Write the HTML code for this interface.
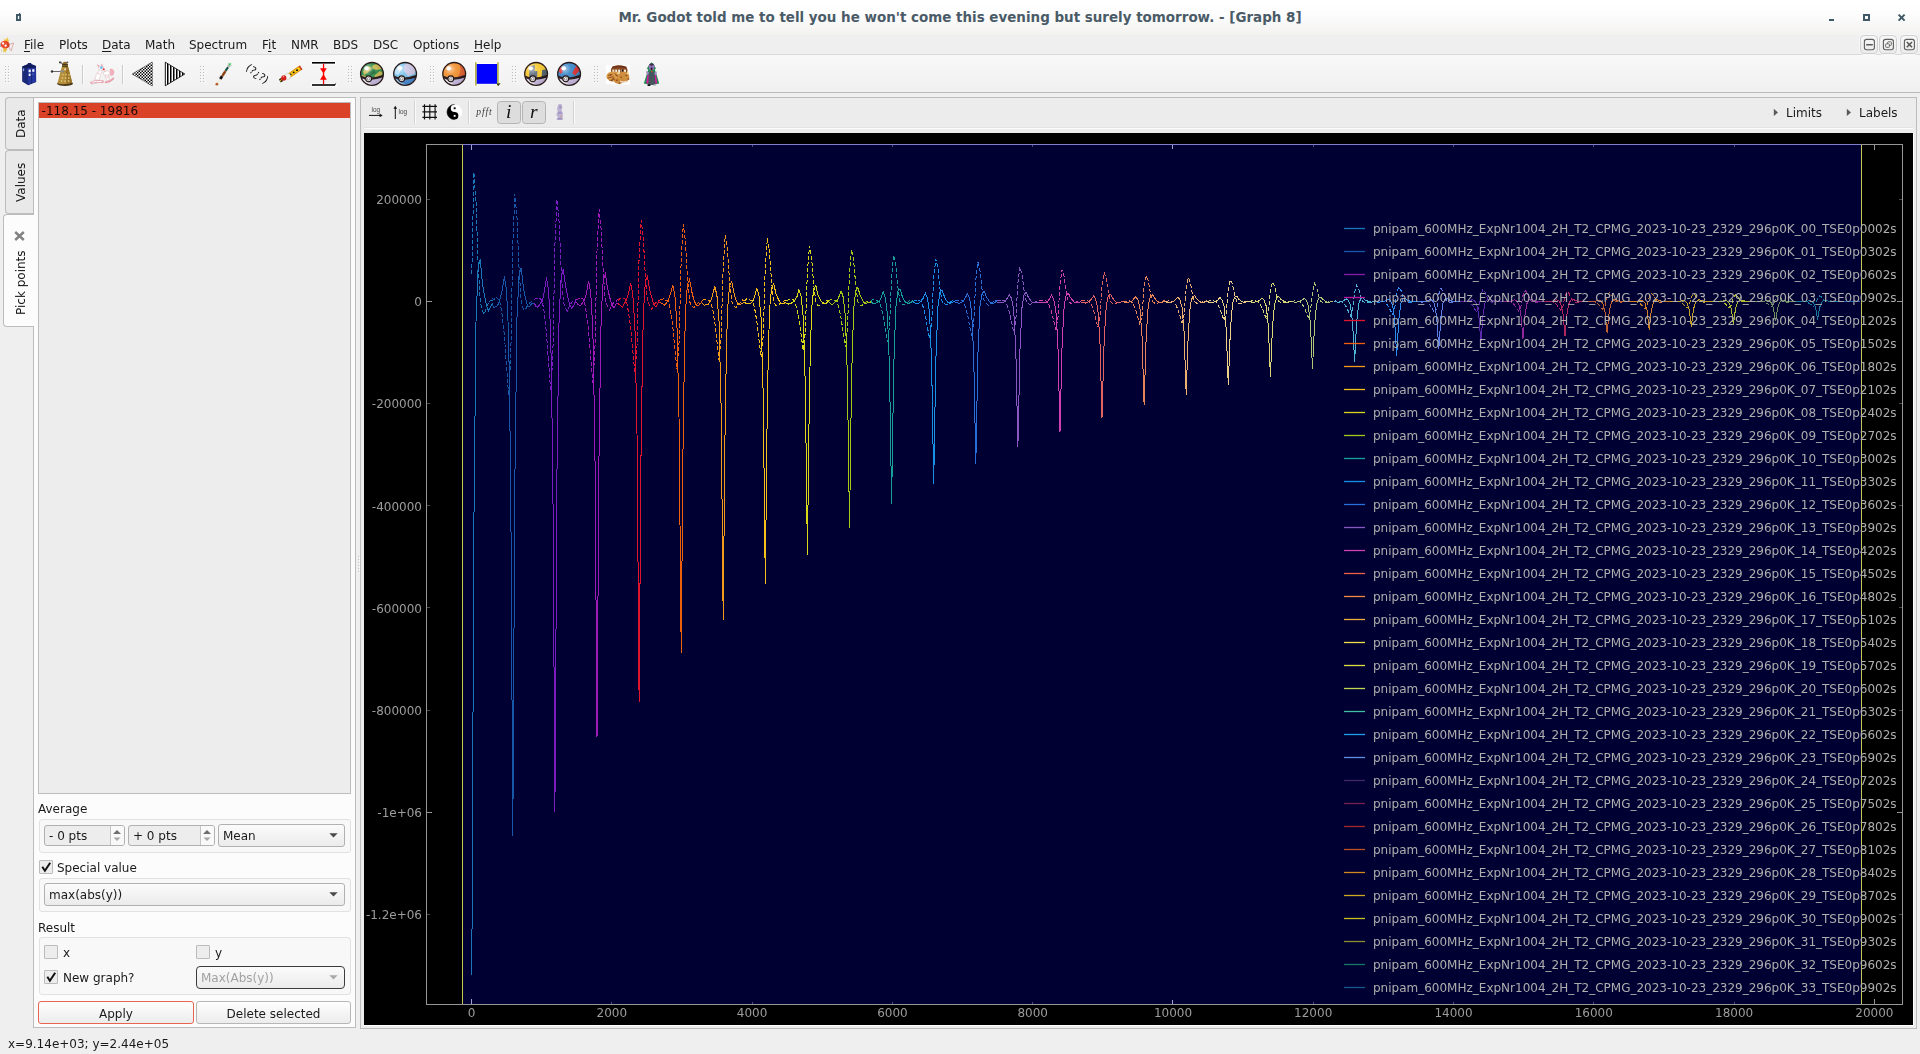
<!DOCTYPE html>
<html lang="en">
<head>
<meta charset="utf-8">
<title>Mr. Godot told me to tell you he won't come this evening but surely tomorrow. - [Graph 8]</title>
<style>
*{box-sizing:border-box;margin:0;padding:0}
html,body{width:1920px;height:1054px;overflow:hidden;background:#efefef}
body{font-family:"DejaVu Sans","Liberation Sans",sans-serif;font-size:12px;color:#1a1a1a;position:relative}
.abs{position:absolute}
#menubar,#statusbar,#sel,.lbl,.btn,.vtext,.ser,#tbicons{will-change:transform}
#titlebar{position:absolute;left:0;top:0;width:1920px;height:35px;background:linear-gradient(#ffffff 0%,#fdfdfd 40%,#f3f2f1 100%)}
#title{position:absolute;left:0;width:1920px;top:9px;text-align:center;font-weight:bold;font-size:13.46px;line-height:17px;color:#4a5b67;white-space:nowrap}
#menubar{position:absolute;left:0;top:35px;width:1920px;height:20px;background:#efefef;border-bottom:1px solid #d9d9d9}
#menubar span{position:absolute;top:3px;line-height:15px;white-space:nowrap}
#menubar u{text-decoration:underline;text-underline-offset:2px}
#toolbar{position:absolute;left:0;top:55px;width:1920px;height:38px;background:linear-gradient(#f8f8f8,#f0f0f0);border-bottom:1px solid #b9b9b9}
#statusbar{position:absolute;left:0;top:1032px;width:1920px;height:22px;background:#efefef}
#statusbar span{position:absolute;left:8px;top:5px;line-height:15px}
/* left dock */
#pane{position:absolute;left:33px;top:97px;width:323px;height:931px;background:#fcfcfc;border:1px solid #bcbcbc}
#list{position:absolute;left:38px;top:102px;width:313px;height:692px;background:#ededed;border:1px solid #bdbdbd}
#sel{position:absolute;left:39px;top:103px;width:311px;height:15px;background:#da4328;line-height:16px;padding-left:2.6px;overflow:hidden;color:#1a0a08}
.tab{position:absolute;left:5px;width:29px;background:#e9e9e9;border:1px solid #bcbcbc;border-right:none;border-radius:4px 0 0 4px}
.tab.active{background:#fcfcfc;left:3px;width:31px}
.vtext{position:absolute;transform-origin:0 0;transform:rotate(-90deg);white-space:nowrap;line-height:15px}

.lbl{position:absolute;white-space:nowrap;line-height:15px}
.gbox{position:absolute;border:1px solid #e2e2e2;border-radius:3px;background:#f8f8f8}
.field{position:absolute;border:1px solid #b1b1b1;border-radius:3px;background:linear-gradient(#fbfbfb,#ebebeb)}
.spin{position:absolute;border:1px solid #b1b1b1;border-radius:3px;background:#ededed;overflow:hidden}
.spin .btns{position:absolute;right:0;top:0;width:14px;height:100%;background:#f9f9f9;border-left:1px solid #c4c4c4}
.cb{position:absolute;width:14px;height:14px;border:1px solid #bcbcbc;background:#ededed;border-radius:1px}
.btn{position:absolute;border:1px solid #b7b7b7;border-radius:3px;background:linear-gradient(#fefefe,#ececec);text-align:center;line-height:15px}

.gtbtn{position:absolute;top:101px;height:23px;border:1px solid #b4b4b4;border-radius:3.5px;background:#dddddd}
.ser{font-family:"Liberation Serif","DejaVu Serif",serif;font-style:italic}
.mdibtn{position:absolute;top:35px;width:18px;height:19px;border:1px solid #cfcfcf;border-radius:4px;background:linear-gradient(#f7f7f7,#ebebeb);box-shadow:0 0 0 1px #f8f8f8}
/* graph panel */
#gpanel{position:absolute;left:360px;top:97px;width:1557px;height:932px;background:#ececec;border:1px solid #bcbcbc}
#plot{position:absolute;left:364px;top:133px;width:1549px;height:892px;background:#000}
</style>
</head>
<body>
<div id="titlebar"><div id="title">Mr. Godot told me to tell you he won't come this evening but surely tomorrow. - [Graph 8]</div></div>
<div id="menubar">
<span style="left:24px"><u>F</u>ile</span>
<span style="left:59px">Plots</span>
<span style="left:102px"><u>D</u>ata</span>
<span style="left:145px">Math</span>
<span style="left:189px">Spectrum</span>
<span style="left:262px">F<u>i</u>t</span>
<span style="left:291px">NMR</span>
<span style="left:333px">BDS</span>
<span style="left:373px">DSC</span>
<span style="left:413px">Options</span>
<span style="left:474px"><u>H</u>elp</span>
</div>
<svg class="abs" style="left:0;top:35px" width="16" height="20" viewBox="0 35 16 20">
 <path d="M4 41.6 L4.6 38.4 L6 40 L7.4 36.8 L8 39.8 L9.2 39.6 L8.4 41.8Z" fill="#f2c230"/>
 <path d="M3.2 48 L6.6 48.4 L7.4 50.2 L5.6 50.6 L6 52.6 L4.4 51.4 L3.6 52.8Z" fill="#e8bc34"/>
 <path d="M9 44.6 L13.6 43 L12.4 46.4 L11.4 50.6 L10 49.4 L9.2 47.4Z" fill="#f4f0f4" stroke="#c0685a" stroke-width="0.5"/>
 <ellipse cx="5" cy="44.6" rx="4.5" ry="3.9" fill="#ee4e30"/>
 <path d="M6.6 41.4 Q9.8 43 9.2 46.6 Q8 48.6 6 48.4 Q8 45.6 6.6 41.4Z" fill="#d84428"/>
 <circle cx="3.1" cy="43.4" r="1.1" fill="#fff"/><circle cx="5.6" cy="45.6" r="1.2" fill="#f6f2f2"/>
 <rect x="0" y="43.4" width="0.8" height="3.6" fill="#a8a0b0"/>
 <rect x="1.2" y="49.4" width="0.5" height="2.4" fill="#c8b880"/>
</svg>
<div id="toolbar"></div>
<svg id="tbicons" width="700" height="37" viewBox="0 56 700 37" style="position:absolute;left:0;top:56px">
<defs>
<pattern id="pcross" width="3" height="3" patternUnits="userSpaceOnUse" x="137" y="72"><rect width="3" height="3" fill="#fff"/><rect x="0" y="0" width="1.45" height="1.45" fill="#000"/><rect x="1.5" y="1.5" width="1.5" height="1.5" fill="#000"/></pattern>
<pattern id="pvert" width="3" height="4" patternUnits="userSpaceOnUse" x="167" y="62"><rect width="3" height="4" fill="#fff"/><rect x="0" width="1.5" height="4" fill="#000"/></pattern>
<radialGradient id="shine" cx="0.32" cy="0.28" r="0.75"><stop offset="0" stop-color="#fff" stop-opacity="0.55"/><stop offset="0.35" stop-color="#fff" stop-opacity="0.08"/><stop offset="1" stop-color="#000" stop-opacity="0.12"/></radialGradient>
</defs>
<rect x="5" y="66" width="1" height="1" fill="#bdbdbd"/><rect x="6" y="67" width="1" height="1" fill="#fdfdfd"/>
<rect x="8" y="66" width="1" height="1" fill="#bdbdbd"/><rect x="9" y="67" width="1" height="1" fill="#fdfdfd"/>
<rect x="5" y="69" width="1" height="1" fill="#bdbdbd"/><rect x="6" y="70" width="1" height="1" fill="#fdfdfd"/>
<rect x="8" y="69" width="1" height="1" fill="#bdbdbd"/><rect x="9" y="70" width="1" height="1" fill="#fdfdfd"/>
<rect x="5" y="72" width="1" height="1" fill="#bdbdbd"/><rect x="6" y="73" width="1" height="1" fill="#fdfdfd"/>
<rect x="8" y="72" width="1" height="1" fill="#bdbdbd"/><rect x="9" y="73" width="1" height="1" fill="#fdfdfd"/>
<rect x="5" y="75" width="1" height="1" fill="#bdbdbd"/><rect x="6" y="76" width="1" height="1" fill="#fdfdfd"/>
<rect x="8" y="75" width="1" height="1" fill="#bdbdbd"/><rect x="9" y="76" width="1" height="1" fill="#fdfdfd"/>
<rect x="5" y="78" width="1" height="1" fill="#bdbdbd"/><rect x="6" y="79" width="1" height="1" fill="#fdfdfd"/>
<rect x="8" y="78" width="1" height="1" fill="#bdbdbd"/><rect x="9" y="79" width="1" height="1" fill="#fdfdfd"/>
<rect x="5" y="81" width="1" height="1" fill="#bdbdbd"/><rect x="6" y="82" width="1" height="1" fill="#fdfdfd"/>
<rect x="8" y="81" width="1" height="1" fill="#bdbdbd"/><rect x="9" y="82" width="1" height="1" fill="#fdfdfd"/>
<rect x="200" y="66" width="1" height="1" fill="#bdbdbd"/><rect x="201" y="67" width="1" height="1" fill="#fdfdfd"/>
<rect x="203" y="66" width="1" height="1" fill="#bdbdbd"/><rect x="204" y="67" width="1" height="1" fill="#fdfdfd"/>
<rect x="200" y="69" width="1" height="1" fill="#bdbdbd"/><rect x="201" y="70" width="1" height="1" fill="#fdfdfd"/>
<rect x="203" y="69" width="1" height="1" fill="#bdbdbd"/><rect x="204" y="70" width="1" height="1" fill="#fdfdfd"/>
<rect x="200" y="72" width="1" height="1" fill="#bdbdbd"/><rect x="201" y="73" width="1" height="1" fill="#fdfdfd"/>
<rect x="203" y="72" width="1" height="1" fill="#bdbdbd"/><rect x="204" y="73" width="1" height="1" fill="#fdfdfd"/>
<rect x="200" y="75" width="1" height="1" fill="#bdbdbd"/><rect x="201" y="76" width="1" height="1" fill="#fdfdfd"/>
<rect x="203" y="75" width="1" height="1" fill="#bdbdbd"/><rect x="204" y="76" width="1" height="1" fill="#fdfdfd"/>
<rect x="200" y="78" width="1" height="1" fill="#bdbdbd"/><rect x="201" y="79" width="1" height="1" fill="#fdfdfd"/>
<rect x="203" y="78" width="1" height="1" fill="#bdbdbd"/><rect x="204" y="79" width="1" height="1" fill="#fdfdfd"/>
<rect x="200" y="81" width="1" height="1" fill="#bdbdbd"/><rect x="201" y="82" width="1" height="1" fill="#fdfdfd"/>
<rect x="203" y="81" width="1" height="1" fill="#bdbdbd"/><rect x="204" y="82" width="1" height="1" fill="#fdfdfd"/>
<rect x="348" y="66" width="1" height="1" fill="#bdbdbd"/><rect x="349" y="67" width="1" height="1" fill="#fdfdfd"/>
<rect x="351" y="66" width="1" height="1" fill="#bdbdbd"/><rect x="352" y="67" width="1" height="1" fill="#fdfdfd"/>
<rect x="348" y="69" width="1" height="1" fill="#bdbdbd"/><rect x="349" y="70" width="1" height="1" fill="#fdfdfd"/>
<rect x="351" y="69" width="1" height="1" fill="#bdbdbd"/><rect x="352" y="70" width="1" height="1" fill="#fdfdfd"/>
<rect x="348" y="72" width="1" height="1" fill="#bdbdbd"/><rect x="349" y="73" width="1" height="1" fill="#fdfdfd"/>
<rect x="351" y="72" width="1" height="1" fill="#bdbdbd"/><rect x="352" y="73" width="1" height="1" fill="#fdfdfd"/>
<rect x="348" y="75" width="1" height="1" fill="#bdbdbd"/><rect x="349" y="76" width="1" height="1" fill="#fdfdfd"/>
<rect x="351" y="75" width="1" height="1" fill="#bdbdbd"/><rect x="352" y="76" width="1" height="1" fill="#fdfdfd"/>
<rect x="348" y="78" width="1" height="1" fill="#bdbdbd"/><rect x="349" y="79" width="1" height="1" fill="#fdfdfd"/>
<rect x="351" y="78" width="1" height="1" fill="#bdbdbd"/><rect x="352" y="79" width="1" height="1" fill="#fdfdfd"/>
<rect x="348" y="81" width="1" height="1" fill="#bdbdbd"/><rect x="349" y="82" width="1" height="1" fill="#fdfdfd"/>
<rect x="351" y="81" width="1" height="1" fill="#bdbdbd"/><rect x="352" y="82" width="1" height="1" fill="#fdfdfd"/>
<rect x="430" y="66" width="1" height="1" fill="#bdbdbd"/><rect x="431" y="67" width="1" height="1" fill="#fdfdfd"/>
<rect x="433" y="66" width="1" height="1" fill="#bdbdbd"/><rect x="434" y="67" width="1" height="1" fill="#fdfdfd"/>
<rect x="430" y="69" width="1" height="1" fill="#bdbdbd"/><rect x="431" y="70" width="1" height="1" fill="#fdfdfd"/>
<rect x="433" y="69" width="1" height="1" fill="#bdbdbd"/><rect x="434" y="70" width="1" height="1" fill="#fdfdfd"/>
<rect x="430" y="72" width="1" height="1" fill="#bdbdbd"/><rect x="431" y="73" width="1" height="1" fill="#fdfdfd"/>
<rect x="433" y="72" width="1" height="1" fill="#bdbdbd"/><rect x="434" y="73" width="1" height="1" fill="#fdfdfd"/>
<rect x="430" y="75" width="1" height="1" fill="#bdbdbd"/><rect x="431" y="76" width="1" height="1" fill="#fdfdfd"/>
<rect x="433" y="75" width="1" height="1" fill="#bdbdbd"/><rect x="434" y="76" width="1" height="1" fill="#fdfdfd"/>
<rect x="430" y="78" width="1" height="1" fill="#bdbdbd"/><rect x="431" y="79" width="1" height="1" fill="#fdfdfd"/>
<rect x="433" y="78" width="1" height="1" fill="#bdbdbd"/><rect x="434" y="79" width="1" height="1" fill="#fdfdfd"/>
<rect x="430" y="81" width="1" height="1" fill="#bdbdbd"/><rect x="431" y="82" width="1" height="1" fill="#fdfdfd"/>
<rect x="433" y="81" width="1" height="1" fill="#bdbdbd"/><rect x="434" y="82" width="1" height="1" fill="#fdfdfd"/>
<rect x="512" y="66" width="1" height="1" fill="#bdbdbd"/><rect x="513" y="67" width="1" height="1" fill="#fdfdfd"/>
<rect x="515" y="66" width="1" height="1" fill="#bdbdbd"/><rect x="516" y="67" width="1" height="1" fill="#fdfdfd"/>
<rect x="512" y="69" width="1" height="1" fill="#bdbdbd"/><rect x="513" y="70" width="1" height="1" fill="#fdfdfd"/>
<rect x="515" y="69" width="1" height="1" fill="#bdbdbd"/><rect x="516" y="70" width="1" height="1" fill="#fdfdfd"/>
<rect x="512" y="72" width="1" height="1" fill="#bdbdbd"/><rect x="513" y="73" width="1" height="1" fill="#fdfdfd"/>
<rect x="515" y="72" width="1" height="1" fill="#bdbdbd"/><rect x="516" y="73" width="1" height="1" fill="#fdfdfd"/>
<rect x="512" y="75" width="1" height="1" fill="#bdbdbd"/><rect x="513" y="76" width="1" height="1" fill="#fdfdfd"/>
<rect x="515" y="75" width="1" height="1" fill="#bdbdbd"/><rect x="516" y="76" width="1" height="1" fill="#fdfdfd"/>
<rect x="512" y="78" width="1" height="1" fill="#bdbdbd"/><rect x="513" y="79" width="1" height="1" fill="#fdfdfd"/>
<rect x="515" y="78" width="1" height="1" fill="#bdbdbd"/><rect x="516" y="79" width="1" height="1" fill="#fdfdfd"/>
<rect x="512" y="81" width="1" height="1" fill="#bdbdbd"/><rect x="513" y="82" width="1" height="1" fill="#fdfdfd"/>
<rect x="515" y="81" width="1" height="1" fill="#bdbdbd"/><rect x="516" y="82" width="1" height="1" fill="#fdfdfd"/>
<rect x="594" y="66" width="1" height="1" fill="#bdbdbd"/><rect x="595" y="67" width="1" height="1" fill="#fdfdfd"/>
<rect x="597" y="66" width="1" height="1" fill="#bdbdbd"/><rect x="598" y="67" width="1" height="1" fill="#fdfdfd"/>
<rect x="594" y="69" width="1" height="1" fill="#bdbdbd"/><rect x="595" y="70" width="1" height="1" fill="#fdfdfd"/>
<rect x="597" y="69" width="1" height="1" fill="#bdbdbd"/><rect x="598" y="70" width="1" height="1" fill="#fdfdfd"/>
<rect x="594" y="72" width="1" height="1" fill="#bdbdbd"/><rect x="595" y="73" width="1" height="1" fill="#fdfdfd"/>
<rect x="597" y="72" width="1" height="1" fill="#bdbdbd"/><rect x="598" y="73" width="1" height="1" fill="#fdfdfd"/>
<rect x="594" y="75" width="1" height="1" fill="#bdbdbd"/><rect x="595" y="76" width="1" height="1" fill="#fdfdfd"/>
<rect x="597" y="75" width="1" height="1" fill="#bdbdbd"/><rect x="598" y="76" width="1" height="1" fill="#fdfdfd"/>
<rect x="594" y="78" width="1" height="1" fill="#bdbdbd"/><rect x="595" y="79" width="1" height="1" fill="#fdfdfd"/>
<rect x="597" y="78" width="1" height="1" fill="#bdbdbd"/><rect x="598" y="79" width="1" height="1" fill="#fdfdfd"/>
<rect x="594" y="81" width="1" height="1" fill="#bdbdbd"/><rect x="595" y="82" width="1" height="1" fill="#fdfdfd"/>
<rect x="597" y="81" width="1" height="1" fill="#bdbdbd"/><rect x="598" y="82" width="1" height="1" fill="#fdfdfd"/>
<rect x="82" y="65" width="1" height="19" fill="#cbcbcb"/><rect x="83" y="65" width="1" height="19" fill="#fbfbfb"/>
<rect x="122" y="65" width="1" height="19" fill="#cbcbcb"/><rect x="123" y="65" width="1" height="19" fill="#fbfbfb"/>
<g>
<path d="M22.3 66.5 L27.5 64.2 L28 63 L31 63 L31.5 64 L36 66 L36.2 82 L28.2 85.3 L22.3 81.6Z" fill="#18246c"/>
<path d="M27.3 67.2 L35.8 66.6 L36 81.8 L28.2 84.8Z" fill="#2436a0"/>
<path d="M22.5 67 L27.3 67.2 L28.2 84.8 L22.6 81.4Z" fill="#1a2878"/>
<path d="M22.3 66.5 L27.5 64.4 L36 66 L35.8 67.4 L27.3 68 L22.3 67.6Z" fill="#101a58"/>
<rect x="28.6" y="69.6" width="2.2" height="2.6" fill="#f4f6ff"/><rect x="32.2" y="69.2" width="2.2" height="2.6" fill="#e8ecff"/><rect x="28.7" y="73.6" width="1.9" height="2.4" fill="#eef0ff"/>
<rect x="22.9" y="68.6" width="1.2" height="2.6" fill="#9aa4e0"/><rect x="32.5" y="73.6" width="1" height="1.2" fill="#7080c8"/>
<rect x="31.3" y="68.4" width="0.6" height="15.4" fill="#141e60"/>
</g>
<g>
<ellipse cx="65" cy="83.6" rx="8" ry="2.3" fill="#4a3818"/>
<path d="M61.8 67 L68.2 67 L72.2 82.6 Q65 85.4 57.4 83.4Z" fill="#b48e3a"/>
<path d="M65.5 67 L68.2 67 L72.2 82.6 Q69 84 66.5 84.2Z" fill="#9a7428"/>
<path d="M62 67 Q62 61.8 65 61.8 Q68 61.8 68 67Z" fill="#8a6a2a"/>
<rect x="62" y="64.2" width="6" height="1" fill="#3a2c14"/><rect x="62" y="66" width="6" height="0.9" fill="#54401c"/>
<rect x="59" y="61.6" width="2.4" height="1.6" fill="#333"/><rect x="66.6" y="61.6" width="1.6" height="1.2" fill="#333"/><path d="M60 62.5 L63 64" stroke="#444" stroke-width="0.8"/>
<rect x="52" y="71" width="11" height="0.9" fill="#5a5a5a"/><circle cx="52" cy="71.5" r="1.2" fill="#303030"/><rect x="60" y="70.6" width="4" height="1.7" fill="#8c8c8c"/>
<circle cx="63" cy="74.6" r="0.9" fill="#dcc070"/>
<circle cx="66" cy="74.6" r="0.9" fill="#dcc070"/>
<circle cx="62.4" cy="78" r="0.9" fill="#dcc070"/>
<circle cx="65.6" cy="78" r="0.9" fill="#dcc070"/>
<circle cx="68.8" cy="78" r="0.9" fill="#dcc070"/>
<circle cx="61.6" cy="81" r="0.9" fill="#dcc070"/>
<circle cx="65" cy="81.2" r="0.9" fill="#dcc070"/>
<circle cx="68.6" cy="81" r="0.9" fill="#dcc070"/>
<circle cx="69" cy="74.8" r="0.9" fill="#dcc070"/>
<rect x="64.4" y="68.4" width="1.6" height="1.8" fill="#f4ecd0"/>
</g>
<g opacity="0.92">
<path d="M97 64.6 L99.4 68.4 L100.6 66.6Z" fill="#f2a2b0" stroke="#d88090" stroke-width="0.3"/><path d="M101.8 63.8 L103.4 67.6 L100.8 67.4Z" fill="#f2a2b0" stroke="#d88090" stroke-width="0.3"/>
<ellipse cx="100.9" cy="68.2" rx="2.5" ry="2.2" fill="#fff" stroke="#d4b4bc" stroke-width="0.5"/>
<ellipse cx="101.3" cy="67.7" rx="1.5" ry="1.4" fill="#6cc0ea"/>
<path d="M99.4 70 Q95.6 74 94.8 79.4 L98.8 80.6 Q100.6 75 102.2 70.8Z" fill="#fff" stroke="#d4b4bc" stroke-width="0.55"/>
<path d="M97.4 73 L99.6 74" stroke="#e89aa6" stroke-width="0.7"/>
<path d="M90.2 82.4 Q95 79.2 103.6 80.8 L103.2 82.8 Q96 81.8 91 83.8Z" fill="#ee98a6" stroke="#d07888" stroke-width="0.3"/>
<path d="M92 82.2 Q96 80.8 101.8 81.6" stroke="#fff" stroke-width="1" fill="none"/>
<path d="M91 84 L97 83.4" stroke="#c8c8cc" stroke-width="0.6"/>
<circle cx="103.7" cy="69.3" r="1.05" fill="#ee2a2a"/>
<path d="M110 69 Q114 68.4 114 72.6 Q113.2 76.6 110.4 75.2Z" fill="#f4a8b6" stroke="#e08898" stroke-width="0.3"/>
<ellipse cx="106.6" cy="73.2" rx="3.3" ry="2.5" fill="#fff" stroke="#d4b4bc" stroke-width="0.55"/>
<path d="M105.2 75.2 Q105.4 79 107.2 80.8 L109.8 79.8 Q108.2 77.6 108.8 75Z" fill="#fff" stroke="#d4b4bc" stroke-width="0.55"/>
<path d="M105 81.6 Q109 81.8 113.6 77.4 L114 79 Q110 83 105.2 83Z" fill="#ee98a6" stroke="#d07888" stroke-width="0.3"/>
<path d="M106.4 77.4 L108.4 77" stroke="#e89aa6" stroke-width="0.7"/>
<path d="M104.2 70.8 L106 72.2" stroke="#e08890" stroke-width="0.6"/>
</g>
<path d="M132.2 74 L152.3 62 L152.3 86Z" fill="url(#pcross)" stroke="#222" stroke-width="0.5"/>
<path d="M165.3 62.2 L165.3 85.8 L184.8 74Z" fill="url(#pvert)" stroke="#000" stroke-width="0.8"/>
<g stroke-linecap="butt">
<path d="M217.58 83.10 L220.24 79.04" stroke="#f1ede0" stroke-width="2.0" fill="none"/>
<path d="M220.24 79.04 L222.20 76.04" stroke="#151515" stroke-width="2.8" fill="none"/>
<path d="M222.20 76.04 L225.56 70.90" stroke="#a8561e" stroke-width="2.3" fill="none"/>
<path d="M223.04 74.76 L223.46 74.11" stroke="#5a2a0c" stroke-width="2.5" fill="none"/>
<path d="M224.16 73.04 L224.58 72.40" stroke="#5a2a0c" stroke-width="2.5" fill="none"/>
<path d="M225.56 70.90 L228.08 67.05" stroke="#165244" stroke-width="2.1" fill="none"/>
<path d="M228.08 67.05 L229.20 65.34" stroke="#a9b0b0" stroke-width="2.6" fill="none"/>
<path d="M229.20 65.34 L230.60 63.20" stroke="#34c848" stroke-width="1.6" fill="none"/>
<circle cx="216.88" cy="84.17" r="1.4" fill="#b8602c"/>
<path d="M228.36 66.62 L228.34 62.64 M228.36 66.62 L231.91 65.58" stroke="#b4baba" stroke-width="0.8" fill="none"/>
</g>
<text x="257.2" y="77.4" text-anchor="middle" font-family="DejaVu Sans, Liberation Sans, sans-serif" font-size="10.6" fill="#111" transform="rotate(36 257.2 74)">(?¿?)</text>
<g>
<path d="M288.6 76 L300.8 67.6" stroke="#d88a0c" stroke-width="4.8" fill="none"/>
<path d="M288.6 75.8 L300.4 67.7" stroke="#f8c818" stroke-width="3.2" fill="none"/>
<path d="M299.3 66 L301.9 69.8" stroke="#c83a20" stroke-width="1.5" fill="none"/>
<ellipse cx="290.60" cy="74.30" rx="1.0" ry="0.85" fill="#111"/>
<ellipse cx="293.70" cy="72.30" rx="1.0" ry="0.85" fill="#111"/>
<ellipse cx="297.00" cy="70.20" rx="1.0" ry="0.85" fill="#111"/>
<path d="M279.8 80.9 L282.6 79.2" stroke="#111" stroke-width="3.6" fill="none"/>
<path d="M280 80.7 L282.6 79.1" stroke="#f6c41c" stroke-width="2.2" stroke-dasharray="0.9 0.8" fill="none"/>
<circle cx="287.6" cy="76.4" r="3" fill="#f6f6f0" stroke="#c0c0b0" stroke-width="0.5"/>
<circle cx="283.8" cy="77.9" r="2.6" fill="#d8201a"/>
<circle cx="283.4" cy="76.6" r="0.8" fill="#f4a090"/>
</g>
<g>
<rect x="311.4" y="61.4" width="24.6" height="3.2" fill="#fff"/><rect x="311.4" y="83.4" width="25.4" height="3.2" fill="#fff"/>
<rect x="312" y="62" width="23" height="1.6" fill="#000"/><rect x="312" y="84.2" width="23" height="1.6" fill="#000"/>
<path d="M332.6 85 L336.4 83 L335 85.8Z" fill="#222"/>
<rect x="322.9" y="63.6" width="1.3" height="20.6" fill="#ff0000"/>
<path d="M320 68.2 L326.8 68.2 L323.5 73.6Z" fill="#ff0000"/><path d="M320 79.8 L326.8 79.8 L323.5 74.2Z" fill="#ff0000"/>
</g>
<clipPath id="clip372"><circle cx="372" cy="73.9" r="11.4"/></clipPath>
<g clip-path="url(#clip372)">
<rect x="360" y="61.900000000000006" width="24" height="24" fill="#2f8a48"/>
<path d="M363 70.9 l5 -5 l4 2 l-3 4 l-5 3Z M373 64.9 l5 -1 l4 5 l-6 1 l-4 -2Z M374 75.9 l6 -5 l3 2 l-4 6Z M362 74.9 l4 1 l3 3 l-6 1Z" fill="#c8b850"/>
<path d="M368 71.9 l6 -2 l2 3 l-5 2Z" fill="#1f6a38"/>
<path d="M360 77.10000000000001 Q369 81.10000000000001 384 76.10000000000001 L384 86.9 L360 86.9Z" fill="#cdbfe6"/>
<path d="M361.5 78.9 Q366 84.4 373 85.10000000000001 Q367 82.4 364 79.5Z" fill="#fff"/>
<path d="M360 76.5 Q369 81.30000000000001 384 75.9" stroke="#241616" stroke-width="2.3" fill="none"/>
<circle cx="372" cy="73.9" r="11.4" fill="url(#shine)"/>
<ellipse cx="366.6" cy="68.30000000000001" rx="2.3" ry="2.1" fill="#fff"/>
</g>
<circle cx="372" cy="73.9" r="11.4" fill="none" stroke="#2a1a1a" stroke-width="1.3"/>
<circle cx="368.6" cy="78.80000000000001" r="2.9" fill="#fff" stroke="#241616" stroke-width="1.1"/>
<circle cx="368.6" cy="78.80000000000001" r="1.3" fill="none" stroke="#6a6060" stroke-width="0.7"/>
<clipPath id="clip405"><circle cx="405.1" cy="73.9" r="11.4"/></clipPath>
<g clip-path="url(#clip405)">
<rect x="393.1" y="61.900000000000006" width="24" height="24" fill="#7cc4ec"/>
<path d="M404.1 64.9 l6 -3 l7 7 l-3 5 l-6 2 l-4 -5Z" fill="#cfc8e6"/>
<path d="M393.1 72.9 l6 -8 l4 2 l-5 8Z" fill="#b8e0f8"/>
<path d="M393.1 77.10000000000001 Q402.1 81.10000000000001 417.1 76.10000000000001 L417.1 86.9 L393.1 86.9Z" fill="#4a8cd4"/>
<path d="M394.6 78.9 Q399.1 84.4 406.1 85.10000000000001 Q400.1 82.4 397.1 79.5Z" fill="#a8d4f4"/>
<path d="M393.1 76.5 Q402.1 81.30000000000001 417.1 75.9" stroke="#241616" stroke-width="2.3" fill="none"/>
<circle cx="405.1" cy="73.9" r="11.4" fill="url(#shine)"/>
<ellipse cx="399.70000000000005" cy="68.30000000000001" rx="2.3" ry="2.1" fill="#fff"/>
</g>
<circle cx="405.1" cy="73.9" r="11.4" fill="none" stroke="#2a1a1a" stroke-width="1.3"/>
<circle cx="401.70000000000005" cy="78.80000000000001" r="2.9" fill="#fff" stroke="#241616" stroke-width="1.1"/>
<circle cx="401.70000000000005" cy="78.80000000000001" r="1.3" fill="none" stroke="#6a6060" stroke-width="0.7"/>
<clipPath id="clip454"><circle cx="454.2" cy="73.9" r="11.4"/></clipPath>
<g clip-path="url(#clip454)">
<rect x="442.2" y="61.900000000000006" width="24" height="24" fill="#f29030"/>
<path d="M459.2 62.900000000000006 Q466.2 67.9 466.2 77.9 L457.2 77.9 Q462.2 71.9 459.2 62.900000000000006Z" fill="#e0602c"/>
<path d="M442.2 77.10000000000001 Q451.2 81.10000000000001 466.2 76.10000000000001 L466.2 86.9 L442.2 86.9Z" fill="#cdbfe6"/>
<path d="M443.7 78.9 Q448.2 84.4 455.2 85.10000000000001 Q449.2 82.4 446.2 79.5Z" fill="#fff"/>
<path d="M442.2 76.5 Q451.2 81.30000000000001 466.2 75.9" stroke="#241616" stroke-width="2.3" fill="none"/>
<circle cx="454.2" cy="73.9" r="11.4" fill="url(#shine)"/>
<ellipse cx="448.8" cy="68.30000000000001" rx="2.3" ry="2.1" fill="#fff"/>
</g>
<circle cx="454.2" cy="73.9" r="11.4" fill="none" stroke="#2a1a1a" stroke-width="1.3"/>
<circle cx="450.8" cy="78.80000000000001" r="2.9" fill="#fff" stroke="#241616" stroke-width="1.1"/>
<circle cx="450.8" cy="78.80000000000001" r="1.3" fill="none" stroke="#6a6060" stroke-width="0.7"/>
<clipPath id="clip536"><circle cx="536.1" cy="73.9" r="11.4"/></clipPath>
<g clip-path="url(#clip536)">
<rect x="524.1" y="61.900000000000006" width="24" height="24" fill="#f8c92e"/>
<path d="M529.6 65.9 L537.6 64.9 L537.1 77.9 L529.1 77.9Z" fill="#5c6c7c"/>
<path d="M542.1 69.9 L548.1 68.9 L548.1 77.9 L541.6 77.9Z" fill="#4e6068"/>
<path d="M535.1 63.900000000000006 L538.6 63.900000000000006 L538.1 70.9 L534.6 70.9Z" fill="#f8c92e"/>
<path d="M524.1 77.10000000000001 Q533.1 81.10000000000001 548.1 76.10000000000001 L548.1 86.9 L524.1 86.9Z" fill="#cdbfe6"/>
<path d="M525.6 78.9 Q530.1 84.4 537.1 85.10000000000001 Q531.1 82.4 528.1 79.5Z" fill="#fff"/>
<path d="M524.1 76.5 Q533.1 81.30000000000001 548.1 75.9" stroke="#241616" stroke-width="2.3" fill="none"/>
<circle cx="536.1" cy="73.9" r="11.4" fill="url(#shine)"/>
<ellipse cx="530.7" cy="68.30000000000001" rx="2.3" ry="2.1" fill="#fff"/>
</g>
<circle cx="536.1" cy="73.9" r="11.4" fill="none" stroke="#2a1a1a" stroke-width="1.3"/>
<circle cx="532.7" cy="78.80000000000001" r="2.9" fill="#fff" stroke="#241616" stroke-width="1.1"/>
<circle cx="532.7" cy="78.80000000000001" r="1.3" fill="none" stroke="#6a6060" stroke-width="0.7"/>
<clipPath id="clip569"><circle cx="569.1" cy="73.9" r="11.4"/></clipPath>
<g clip-path="url(#clip569)">
<rect x="557.1" y="61.900000000000006" width="24" height="24" fill="#3a86c8"/>
<path d="M558.1 69.9 L561.1 65.9 L562.6 71.9 L560.6 73.9Z" fill="#e43030"/>
<path d="M572.1 72.9 L576.6 64.9 L580.1 69.9 L575.1 75.4Z" fill="#d83030"/>
<path d="M557.1 74.9 Q569.1 79.9 581.1 73.9 L581.1 76.9 L557.1 77.9Z" fill="#2a64b0"/>
<path d="M557.1 77.10000000000001 Q566.1 81.10000000000001 581.1 76.10000000000001 L581.1 86.9 L557.1 86.9Z" fill="#cdbfe6"/>
<path d="M558.6 78.9 Q563.1 84.4 570.1 85.10000000000001 Q564.1 82.4 561.1 79.5Z" fill="#fff"/>
<path d="M557.1 76.5 Q566.1 81.30000000000001 581.1 75.9" stroke="#241616" stroke-width="2.3" fill="none"/>
<circle cx="569.1" cy="73.9" r="11.4" fill="url(#shine)"/>
<ellipse cx="563.7" cy="68.30000000000001" rx="2.3" ry="2.1" fill="#fff"/>
</g>
<circle cx="569.1" cy="73.9" r="11.4" fill="none" stroke="#2a1a1a" stroke-width="1.3"/>
<circle cx="565.7" cy="78.80000000000001" r="2.9" fill="#fff" stroke="#241616" stroke-width="1.1"/>
<circle cx="565.7" cy="78.80000000000001" r="1.3" fill="none" stroke="#6a6060" stroke-width="0.7"/>
<g>
<rect x="474.4" y="61.6" width="2.8" height="24.6" fill="#fff"/><rect x="496.6" y="61.6" width="2.8" height="24" fill="#fff"/>
<rect x="476" y="63.2" width="21.6" height="21" fill="#fff"/>
<rect x="476.6" y="64" width="20.6" height="19.8" fill="#0000ff"/>
<rect x="475.2" y="62.2" width="1.3" height="23.4" fill="#9c9c18"/><rect x="497.3" y="62.2" width="1.3" height="22.6" fill="#9c9c18"/>
<path d="M496.4 83.6 L500.6 83.2 L498.2 86.2Z" fill="#3a3a10"/>
</g>
<g>
<rect x="606" y="64.8" width="24" height="19.4" fill="#fff"/>
<path d="M611 69 Q612 65.4 619 65.2 Q626 65.4 627.4 69 L628 76 L611 76Z" fill="#8a4a22"/>
<path d="M612 68 Q619 66.4 626.6 68.4 L626.6 66.8 Q619 64.8 612.4 66.6Z" fill="#6a3018"/>
<rect x="612.4" y="69.6" width="1.9" height="3.4" fill="#f4f0e6"/>
<rect x="615.2" y="69.6" width="1.9" height="3.4" fill="#f4f0e6"/>
<rect x="618.2" y="69.6" width="1.9" height="3.4" fill="#f4f0e6"/>
<rect x="621.2" y="69.6" width="1.9" height="3.4" fill="#f4f0e6"/>
<rect x="624" y="69.6" width="1.9" height="3.4" fill="#f4f0e6"/>
<rect x="621.6" y="69.4" width="1.6" height="4" fill="#2a1a10"/>
<ellipse cx="613.6" cy="76.4" rx="7.2" ry="5" fill="#d89a48"/>
<ellipse cx="623.4" cy="77" rx="6" ry="5.6" fill="#d08e40"/>
<ellipse cx="619" cy="81" rx="5" ry="2.8" fill="#cc8a3c"/>
<path d="M618 70.4 L619.8 74 L617 74.2Z M627.6 70.6 L629.4 74.6 L626.4 74Z" fill="#f0d890"/>
<path d="M620 80.6 Q623 82.6 626.6 80.6 L626 81.8 Q623 83.6 620.4 81.8Z" fill="#f6f0ea"/>
<rect x="609.6" y="74.6" width="1.7" height="1.3" fill="#8a4a1e"/>
<rect x="612.4" y="77.6" width="1.7" height="1.3" fill="#8a4a1e"/>
<rect x="615.8" y="74.8" width="1.7" height="1.3" fill="#8a4a1e"/>
<rect x="611" y="80" width="1.7" height="1.3" fill="#8a4a1e"/>
<rect x="616" y="79.6" width="1.7" height="1.3" fill="#8a4a1e"/>
<rect x="620.2" y="76.6" width="1.7" height="1.3" fill="#8a4a1e"/>
<rect x="625.4" y="74.8" width="1.7" height="1.3" fill="#8a4a1e"/>
<rect x="627.6" y="78.4" width="1.7" height="1.3" fill="#8a4a1e"/>
<rect x="618.6" y="82.6" width="1.7" height="1.3" fill="#8a4a1e"/>
<path d="M608 75.4 L612.6 74.2 M607.6 78 L613.4 76.6 M609.4 80.6 L615 79 M614.6 73.2 L617.4 76.4" stroke="#8a4c1c" stroke-width="0.9" fill="none"/>
<path d="M611.4 84.4 L612.6 81.6 L615 82.4 L615.4 84.4Z M621.4 84.4 L621.8 83.2 L624.2 83.6 L624.6 84.4Z M606 80.4 L608.2 82.6 L606 84Z M629 80 L630 80 L630 84.2 L626 84.2Z" fill="#fff"/>
<rect x="624.8" y="77.2" width="1" height="1" fill="#c8c020"/><rect x="619.4" y="77.8" width="1" height="1" fill="#c8c020"/>
</g>
<g>
<path d="M651.6 62.2 L654.2 65.6 L656 68.6 L654.8 69.4 L657 76 L659.2 83.6 L655 84.4 L648 84.4 L643.8 83.6 L646.2 76 L648.2 69.4 L646.8 68.6 L648.8 65.6Z" fill="#1f8c52"/>
<path d="M647.4 75 L656 75 L657.2 83.4 L646.2 83.4Z" fill="#d81aa0"/>
<path d="M648.8 71.4 L654.6 71.4 L655.4 85 L648.2 85Z" fill="#46565e"/>
<path d="M648.4 65.4 Q651.6 63 654.8 65.4 L654 69.6 Q651.6 71 649.2 69.6Z" fill="#9272b4"/>
<path d="M649 64.6 L651.6 66 L654.2 64.4 L653 63.4 L650.2 63.4Z" fill="#3a3048"/>
<rect x="650.8" y="67.6" width="1.6" height="2.2" fill="#1a1014"/><rect x="651" y="70.6" width="1.2" height="1.6" fill="#e83020"/>
<path d="M646.6 70.6 L649 72.6 L648 75 L646 73Z M654.4 72.6 L656.8 71.6 L656.6 74.6 L654.8 75Z" fill="#a88cc8"/>
<ellipse cx="649" cy="85.2" rx="1.6" ry="0.9" fill="#111"/><ellipse cx="654.8" cy="85.2" rx="1.6" ry="0.9" fill="#c8c8c8"/>
</g>
</svg>

<div class="tab" style="top:97px;height:53px"></div>
<div class="tab" style="top:150px;height:64px"></div>
<div id="pane"></div>
<div class="tab active" style="top:214px;height:113px"></div>
<div id="list"></div>
<div id="sel">-118.15 - 19816</div>


<div class="vtext" style="left:13.6px;top:138px">Data</div>
<div class="vtext" style="left:13.6px;top:202px">Values</div>
<div class="vtext" style="left:13.6px;top:315px">Pick points</div>
<svg class="abs" style="left:14px;top:231px" width="11" height="10" viewBox="0 0 11 10"><path d="M1.2 1 L9.8 9 M9.8 1 L1.2 9" stroke="#828282" stroke-width="2.4" fill="none"/></svg>

<div class="lbl" style="left:38px;top:802px">Average</div>
<div class="gbox" style="left:39px;top:819px;width:312px;height:34px"></div>
<div class="spin" style="left:44px;top:825px;width:81px;height:21px"><div class="btns"></div></div>
<div class="lbl" style="left:49px;top:829px">- 0 pts</div>
<div class="spin" style="left:128px;top:825px;width:87px;height:21px"><div class="btns"></div></div>
<div class="lbl" style="left:133px;top:829px">+ 0 pts</div>
<svg class="abs" style="left:112px;top:829px" width="10" height="14" viewBox="0 0 10 14"><path d="M1 5 L5 1 L9 5Z" fill="#6e6e6e"/><path d="M1.5 8.5 L5 12 L8.5 8.5Z" fill="#a5a5a5"/></svg>
<svg class="abs" style="left:202px;top:829px" width="10" height="14" viewBox="0 0 10 14"><path d="M1 5 L5 1 L9 5Z" fill="#6e6e6e"/><path d="M1.5 8.5 L5 12 L8.5 8.5Z" fill="#a5a5a5"/></svg>
<div class="field" style="left:218px;top:824px;width:127px;height:23px"></div>
<div class="lbl" style="left:223px;top:829px">Mean</div>
<svg class="abs" style="left:329px;top:833px" width="9" height="5" viewBox="0 0 9 5"><path d="M0.3 0.2 L8.7 0.2 L4.5 4.6Z" fill="#4a4a4a"/></svg>

<div class="cb" style="left:39px;top:860px"></div>
<svg class="abs" style="left:40px;top:861px" width="12" height="12" viewBox="0 0 12 12"><path d="M2.3 5.8 L4.9 9.8 L10.2 1.8" stroke="#111" stroke-width="2" fill="none"/></svg>
<div class="lbl" style="left:57px;top:861px">Special value</div>
<div class="gbox" style="left:39px;top:878px;width:312px;height:34px"></div>
<div class="field" style="left:44px;top:883px;width:301px;height:23px"></div>
<div class="lbl" style="left:49px;top:888px">max(abs(y))</div>
<svg class="abs" style="left:329px;top:892px" width="9" height="5" viewBox="0 0 9 5"><path d="M0.3 0.2 L8.7 0.2 L4.5 4.6Z" fill="#4a4a4a"/></svg>

<div class="lbl" style="left:38px;top:921px">Result</div>
<div class="gbox" style="left:39px;top:937px;width:312px;height:58px"></div>
<div class="cb" style="left:44px;top:945px"></div>
<div class="lbl" style="left:63px;top:946px">x</div>
<div class="cb" style="left:196px;top:945px"></div>
<div class="lbl" style="left:215px;top:946px">y</div>
<div class="cb" style="left:44px;top:970px"></div>
<svg class="abs" style="left:45px;top:971px" width="12" height="12" viewBox="0 0 12 12"><path d="M2.3 5.8 L4.9 9.8 L10.2 1.8" stroke="#111" stroke-width="2" fill="none"/></svg>
<div class="lbl" style="left:63px;top:971px">New graph?</div>
<div class="field" style="left:196px;top:966px;width:149px;height:23px;border:1.5px solid #3c3c3c;border-radius:4px"></div>
<div class="lbl" style="left:201px;top:971px;color:#a2a2a2">Max(Abs(y))</div>
<svg class="abs" style="left:329px;top:975px" width="9" height="5" viewBox="0 0 9 5"><path d="M0.3 0.2 L8.7 0.2 L4.5 4.6Z" fill="#a8a8a8"/></svg>

<div class="btn" style="left:38px;top:1001px;width:156px;height:23px;border-color:#e9644e;padding-top:5px">Apply</div>
<div class="btn" style="left:196px;top:1001px;width:155px;height:23px;padding-top:5px">Delete selected</div>

<div id="gpanel"></div>
<div class="abs" style="left:358px;top:556px;width:1px;height:1px;background:#c2c2c2"></div><div class="abs" style="left:359px;top:557px;width:1px;height:1px;background:#fafafa"></div><div class="abs" style="left:358px;top:559px;width:1px;height:1px;background:#c2c2c2"></div><div class="abs" style="left:359px;top:560px;width:1px;height:1px;background:#fafafa"></div><div class="abs" style="left:358px;top:562px;width:1px;height:1px;background:#c2c2c2"></div><div class="abs" style="left:359px;top:563px;width:1px;height:1px;background:#fafafa"></div><div class="abs" style="left:358px;top:565px;width:1px;height:1px;background:#c2c2c2"></div><div class="abs" style="left:359px;top:566px;width:1px;height:1px;background:#fafafa"></div><div class="abs" style="left:358px;top:568px;width:1px;height:1px;background:#c2c2c2"></div><div class="abs" style="left:359px;top:569px;width:1px;height:1px;background:#fafafa"></div><div class="abs" style="left:358px;top:571px;width:1px;height:1px;background:#c2c2c2"></div><div class="abs" style="left:359px;top:572px;width:1px;height:1px;background:#fafafa"></div>
<div id="plot"></div>
<div class="abs" style="left:1913px;top:133px;width:1px;height:893px;background:#fdfdfd"></div><div class="abs" style="left:364px;top:1025px;width:1550px;height:1px;background:#fdfdfd"></div>
<svg id="plotsvg" width="1549" height="892" viewBox="364 133 1549 892" style="position:absolute;left:364px;top:133px;will-change:transform" font-family="DejaVu Sans, Liberation Sans, sans-serif" font-size="12">
<rect x="364" y="133" width="1549" height="892" fill="#000"/>
<rect x="463" y="145" width="1398" height="859" fill="#000033"/>
<g fill="none" stroke-width="1" shape-rendering="crispEdges" stroke-linejoin="miter">
<path d="M471.8 975.5 L473.9 523.9 L476.0 321.7 L478.1 267.8 L480.2 259.0 L482.3 282.1 L484.4 295.4 L486.5 305.4 L488.6 311.0 L490.7 306.4 L492.8 303.5" stroke="#1878b8"/>
<path d="M471.8 274.4 L473.9 172.5 L476.0 200.9 L478.1 262.8 L480.2 301.5 L482.3 310.6 L484.4 314.1 L486.5 307.2 L488.6 302.8 L490.7 300.5 L492.8 300.5" stroke="#1878b8" stroke-dasharray="4 2"/>
<path d="M491.7 303.4 L493.8 307.2 L496.0 306.9 L498.1 304.4 L500.2 298.7 L502.3 289.5 L504.4 276.4 L506.5 290.8 L508.6 333.5 L510.7 477.7 L512.8 835.5 L514.9 477.7 L517.0 317.5 L519.1 274.8 L521.2 267.9 L523.3 286.8 L525.4 297.9 L527.5 305.9 L529.6 306.9 L531.7 303.5 L533.8 303.1" stroke="#1858a8"/>
<path d="M491.7 298.3 L493.8 299.7 L496.0 296.9 L498.1 299.2 L500.2 303.0 L502.3 316.1 L504.4 335.7 L506.5 365.7 L508.6 395.7 L510.7 360.4 L512.8 242.7 L514.9 194.5 L517.0 218.0 L519.1 269.4 L521.2 301.5 L523.3 309.1 L525.4 309.6 L527.5 305.5 L529.6 303.0 L531.7 301.8 L533.8 300.3" stroke="#1858a8" stroke-dasharray="4 2"/>
<path d="M533.8 302.4 L535.9 306.2 L538.0 307.3 L540.1 303.5 L542.3 301.4 L544.4 291.2 L546.5 277.5 L548.6 291.3 L550.7 332.1 L552.8 469.8 L554.9 811.5 L557.0 469.8 L559.1 316.8 L561.2 276.0 L563.3 269.4 L565.4 285.4 L567.5 295.7 L569.6 304.9 L571.7 308.4 L573.8 305.2 L575.9 300.6" stroke="#7a1cc0"/>
<path d="M533.8 299.7 L535.9 298.7 L538.0 299.1 L540.1 298.3 L542.3 301.3 L544.4 313.6 L546.5 334.1 L548.6 362.7 L550.7 391.3 L552.8 357.6 L554.9 245.4 L557.0 199.5 L559.1 221.9 L561.2 270.9 L563.3 301.5 L565.4 308.3 L567.5 311.3 L569.6 304.8 L571.7 302.6 L573.8 300.0 L575.9 299.2" stroke="#7a1cc0" stroke-dasharray="4 2"/>
<path d="M575.9 301.7 L578.0 304.4 L580.1 306.0 L582.2 303.1 L584.3 300.7 L586.4 294.1 L588.6 281.0 L590.7 292.8 L592.8 327.6 L594.9 445.2 L597.0 737.1 L599.1 445.2 L601.2 314.6 L603.3 279.7 L605.4 274.1 L607.5 288.0 L609.6 297.0 L611.7 304.5 L613.8 307.7 L615.9 304.3 L618.0 302.8" stroke="#a01ab8"/>
<path d="M575.9 300.2 L578.0 298.9 L580.1 298.9 L582.2 298.0 L584.3 301.0 L586.4 312.9 L588.6 330.9 L590.7 356.7 L592.8 382.5 L594.9 352.1 L597.0 250.9 L599.1 209.5 L601.2 229.7 L603.3 273.9 L605.4 301.5 L607.5 305.7 L609.6 309.9 L611.7 304.7 L613.8 302.5 L615.9 301.6 L618.0 298.9" stroke="#a01ab8" stroke-dasharray="4 2"/>
<path d="M618.0 303.7 L620.1 305.0 L622.2 307.1 L624.3 303.8 L626.4 299.8 L628.5 294.1 L630.6 282.7 L632.7 293.5 L634.9 325.5 L637.0 433.5 L639.1 701.5 L641.2 433.5 L643.3 313.5 L645.4 281.5 L647.5 276.3 L649.6 289.9 L651.7 297.0 L653.8 304.8 L655.9 306.6 L658.0 302.9 L660.1 302.9" stroke="#e0142c"/>
<path d="M618.0 300.5 L620.1 298.6 L622.2 299.2 L624.3 298.5 L626.4 300.6 L628.5 312.2 L630.6 327.4 L632.7 350.1 L634.9 372.8 L637.0 346.1 L639.1 256.9 L641.2 220.5 L643.3 238.3 L645.4 277.2 L647.5 301.5 L649.6 305.4 L651.7 309.2 L653.8 305.4 L655.9 302.3 L658.0 301.3 L660.1 300.1" stroke="#e0142c" stroke-dasharray="4 2"/>
<path d="M660.1 302.9 L662.2 303.2 L664.3 305.3 L666.4 303.2 L668.5 299.8 L670.6 293.6 L672.7 285.0 L674.8 294.5 L676.9 322.6 L679.0 417.3 L681.2 652.5 L683.3 417.3 L685.4 312.0 L687.5 283.9 L689.6 279.4 L691.7 291.2 L693.8 299.7 L695.9 304.7 L698.0 306.1 L700.1 303.3 L702.2 302.7" stroke="#f0600c"/>
<path d="M660.1 299.8 L662.2 299.1 L664.3 298.9 L666.4 300.6 L668.5 300.9 L670.6 310.8 L672.7 326.1 L674.8 347.7 L676.9 369.3 L679.0 343.9 L681.2 259.1 L683.3 224.5 L685.4 241.4 L687.5 278.4 L689.6 301.5 L691.7 306.4 L693.8 307.7 L695.9 305.6 L698.0 303.1 L700.1 301.8 L702.2 300.8" stroke="#f0600c" stroke-dasharray="4 2"/>
<path d="M702.2 303.3 L704.3 305.1 L706.4 304.7 L708.5 304.0 L710.6 301.2 L712.7 294.4 L714.8 286.6 L716.9 295.1 L719.0 320.6 L721.1 406.4 L723.2 619.5 L725.3 406.4 L727.4 311.0 L729.6 285.6 L731.7 281.5 L733.8 292.0 L735.9 299.9 L738.0 303.8 L740.1 304.3 L742.2 303.8 L744.3 301.4" stroke="#f59a18"/>
<path d="M702.2 300.5 L704.3 299.1 L706.4 300.2 L708.5 300.2 L710.6 302.2 L712.7 309.1 L714.8 322.6 L716.9 341.1 L719.0 359.6 L721.1 337.8 L723.2 265.2 L725.3 235.5 L727.4 250.0 L729.6 281.7 L731.7 301.5 L733.8 305.5 L735.9 307.9 L738.0 304.6 L740.1 302.8 L742.2 299.9 L744.3 300.9" stroke="#f59a18" stroke-dasharray="4 2"/>
<path d="M744.3 302.3 L746.4 303.7 L748.5 303.9 L750.6 303.7 L752.7 301.6 L754.8 295.8 L756.9 288.2 L759.0 295.9 L761.1 318.4 L763.2 394.6 L765.3 583.5 L767.4 394.6 L769.5 310.0 L771.6 287.4 L773.7 283.7 L775.9 293.4 L778.0 298.6 L780.1 302.5 L782.2 304.0 L784.3 303.2 L786.4 301.8" stroke="#f5c018"/>
<path d="M744.3 301.1 L746.4 299.0 L748.5 299.2 L750.6 300.2 L752.7 301.0 L754.8 309.2 L756.9 321.8 L759.0 339.6 L761.1 357.4 L763.2 336.4 L765.3 266.6 L767.4 238.0 L769.5 252.0 L771.6 282.4 L773.7 301.5 L775.9 305.8 L778.0 306.0 L780.1 303.5 L782.2 301.7 L784.3 300.8 L786.4 301.1" stroke="#f5c018" stroke-dasharray="4 2"/>
<path d="M786.4 303.1 L788.5 304.0 L790.6 303.5 L792.7 302.2 L794.8 300.2 L796.9 296.9 L799.0 289.6 L801.1 296.4 L803.2 316.7 L805.3 385.0 L807.4 554.5 L809.5 385.0 L811.6 309.1 L813.7 288.9 L815.8 285.6 L817.9 294.4 L820.0 299.3 L822.2 302.4 L824.3 304.0 L826.4 303.2 L828.5 300.8" stroke="#d8d818"/>
<path d="M786.4 300.8 L788.5 299.8 L790.6 299.9 L792.7 299.3 L794.8 301.7 L796.9 309.2 L799.0 319.3 L801.1 334.8 L803.2 350.3 L805.3 332.0 L807.4 271.0 L809.5 246.0 L811.6 258.2 L813.7 284.9 L815.8 301.5 L817.9 305.3 L820.0 305.6 L822.2 303.8 L824.3 301.6 L826.4 300.7 L828.5 299.9" stroke="#d8d818" stroke-dasharray="4 2"/>
<path d="M828.5 301.8 L830.6 303.8 L832.7 304.3 L834.8 302.1 L836.9 301.2 L839.0 296.6 L841.1 290.9 L843.2 297.0 L845.3 315.1 L847.4 376.1 L849.5 527.5 L851.6 376.1 L853.7 308.3 L855.8 290.2 L857.9 287.3 L860.0 295.3 L862.1 299.1 L864.2 303.4 L866.3 303.2 L868.5 302.6 L870.6 302.1" stroke="#a8c818"/>
<path d="M828.5 300.5 L830.6 299.7 L832.7 299.5 L834.8 300.4 L836.9 300.8 L839.0 308.8 L841.1 318.1 L843.2 332.7 L845.3 347.3 L847.4 330.1 L849.5 272.9 L851.6 249.5 L853.7 260.9 L855.8 285.9 L857.9 301.5 L860.0 305.2 L862.1 305.4 L864.2 303.1 L866.3 301.8 L868.5 300.9 L870.6 301.2" stroke="#a8c818" stroke-dasharray="4 2"/>
<path d="M870.6 301.4 L872.7 303.1 L874.8 303.8 L876.9 302.3 L879.0 301.4 L881.1 297.8 L883.2 292.0 L885.3 297.5 L887.4 313.6 L889.5 368.2 L891.6 503.5 L893.7 368.2 L895.8 307.6 L897.9 291.4 L900.0 288.8 L902.1 295.8 L904.2 300.4 L906.3 302.9 L908.4 303.6 L910.5 302.4 L912.6 301.5" stroke="#18a098"/>
<path d="M870.6 300.4 L872.7 299.8 L874.8 299.6 L876.9 300.7 L879.0 301.8 L881.1 307.4 L883.2 316.2 L885.3 329.1 L887.4 342.0 L889.5 326.8 L891.6 276.2 L893.7 255.5 L895.8 265.6 L897.9 287.7 L900.0 301.5 L902.1 304.4 L904.2 304.8 L906.3 303.4 L908.4 301.4 L910.5 300.5 L912.6 300.5" stroke="#18a098" stroke-dasharray="4 2"/>
<path d="M912.6 302.0 L914.7 303.0 L916.9 304.1 L919.0 303.0 L921.1 300.8 L923.2 298.1 L925.3 292.9 L927.4 297.9 L929.5 312.4 L931.6 361.6 L933.7 483.5 L935.8 361.6 L937.9 307.0 L940.0 292.4 L942.1 290.0 L944.2 296.0 L946.3 300.5 L948.4 302.9 L950.5 303.2 L952.6 302.1 L954.7 301.0" stroke="#1890e8"/>
<path d="M912.6 301.3 L914.7 300.8 L916.9 299.8 L919.0 300.5 L921.1 301.4 L923.2 307.0 L925.3 315.1 L927.4 327.0 L929.5 338.9 L931.6 324.9 L933.7 278.1 L935.8 259.0 L937.9 268.4 L940.0 288.8 L942.1 301.5 L944.2 303.7 L946.3 305.0 L948.4 303.5 L950.5 301.9 L952.6 300.7 L954.7 300.7" stroke="#1890e8" stroke-dasharray="4 2"/>
<path d="M954.7 301.9 L956.8 302.8 L958.9 303.3 L961.0 302.5 L963.2 301.0 L965.3 297.8 L967.4 293.9 L969.5 298.3 L971.6 311.2 L973.7 355.0 L975.8 463.5 L977.9 355.0 L980.0 306.4 L982.1 293.4 L984.2 291.3 L986.3 296.6 L988.4 299.8 L990.5 302.9 L992.6 303.8 L994.7 302.6 L996.8 301.2" stroke="#2870d8"/>
<path d="M954.7 300.7 L956.8 300.3 L958.9 300.3 L961.0 300.0 L963.2 301.1 L965.3 306.9 L967.4 314.1 L969.5 325.2 L971.6 336.3 L973.7 323.2 L975.8 279.8 L977.9 262.0 L980.0 270.7 L982.1 289.6 L984.2 301.5 L986.3 303.3 L988.4 305.3 L990.5 303.1 L992.6 302.2 L994.7 300.9 L996.8 300.2" stroke="#2870d8" stroke-dasharray="4 2"/>
<path d="M996.8 302.3 L998.9 302.5 L1001.0 302.7 L1003.1 302.7 L1005.2 301.3 L1007.3 298.1 L1009.5 294.7 L1011.6 298.6 L1013.7 310.2 L1015.8 349.4 L1017.9 446.5 L1020.0 349.4 L1022.1 305.9 L1024.2 294.2 L1026.3 292.4 L1028.4 297.5 L1030.5 300.3 L1032.6 302.7 L1034.7 302.9 L1036.8 302.0 L1038.9 302.0" stroke="#8858c0"/>
<path d="M996.8 300.6 L998.9 301.0 L1001.0 300.0 L1003.1 300.2 L1005.2 301.5 L1007.3 305.6 L1009.5 312.5 L1011.6 322.2 L1013.7 331.9 L1015.8 320.5 L1017.9 282.5 L1020.0 267.0 L1022.1 274.6 L1024.2 291.1 L1026.3 301.5 L1028.4 303.6 L1030.5 304.6 L1032.6 303.1 L1034.7 302.3 L1036.8 301.2 L1038.9 301.0" stroke="#8858c0" stroke-dasharray="4 2"/>
<path d="M1038.9 301.8 L1041.0 302.9 L1043.1 302.7 L1045.2 302.6 L1047.3 301.7 L1049.4 299.1 L1051.5 295.4 L1053.6 298.9 L1055.8 309.3 L1057.9 344.4 L1060.0 431.5 L1062.1 344.4 L1064.2 305.4 L1066.3 295.0 L1068.4 293.3 L1070.5 297.7 L1072.6 300.2 L1074.7 302.6 L1076.8 302.9 L1078.9 302.4 L1081.0 301.3" stroke="#d040b0"/>
<path d="M1038.9 300.9 L1041.0 300.2 L1043.1 300.1 L1045.2 300.9 L1047.3 301.2 L1049.4 306.0 L1051.5 311.7 L1053.6 320.6 L1055.8 329.5 L1057.9 319.0 L1060.0 284.0 L1062.1 269.7 L1064.2 276.7 L1066.3 292.0 L1068.4 301.5 L1070.5 303.0 L1072.6 304.4 L1074.7 302.4 L1076.8 301.6 L1078.9 301.6 L1081.0 300.9" stroke="#d040b0" stroke-dasharray="4 2"/>
<path d="M1081.0 302.2 L1083.1 302.3 L1085.2 303.1 L1087.3 302.5 L1089.4 301.3 L1091.5 299.1 L1093.6 296.0 L1095.7 299.2 L1097.8 308.5 L1099.9 339.8 L1102.0 417.5 L1104.2 339.8 L1106.3 305.0 L1108.4 295.7 L1110.5 294.2 L1112.6 298.2 L1114.7 300.6 L1116.8 302.5 L1118.9 303.1 L1121.0 302.1 L1123.1 301.3" stroke="#e06464"/>
<path d="M1081.0 300.5 L1083.1 300.5 L1085.2 300.3 L1087.3 300.5 L1089.4 301.6 L1091.5 304.9 L1093.6 310.8 L1095.7 318.9 L1097.8 327.0 L1099.9 317.4 L1102.0 285.6 L1104.2 272.5 L1106.3 278.9 L1108.4 292.8 L1110.5 301.5 L1112.6 303.6 L1114.7 304.2 L1116.8 303.0 L1118.9 302.0 L1121.0 301.4 L1123.1 301.1" stroke="#e06464" stroke-dasharray="4 2"/>
<path d="M1123.1 301.8 L1125.2 302.4 L1127.3 302.8 L1129.4 302.0 L1131.5 301.5 L1133.6 299.1 L1135.7 296.6 L1137.8 299.4 L1139.9 307.7 L1142.0 335.7 L1144.1 405.0 L1146.2 335.7 L1148.3 304.6 L1150.5 296.3 L1152.6 295.0 L1154.7 298.2 L1156.8 300.7 L1158.9 302.2 L1161.0 302.5 L1163.1 302.0 L1165.2 301.4" stroke="#e48458"/>
<path d="M1123.1 301.2 L1125.2 301.2 L1127.3 301.1 L1129.4 300.8 L1131.5 301.5 L1133.6 305.2 L1135.7 309.8 L1137.8 317.1 L1139.9 324.4 L1142.0 315.8 L1144.1 287.2 L1146.2 275.5 L1148.3 281.2 L1150.5 293.7 L1152.6 301.5 L1154.7 303.1 L1156.8 303.4 L1158.9 302.5 L1161.0 301.4 L1163.1 301.0 L1165.2 300.9" stroke="#e48458" stroke-dasharray="4 2"/>
<path d="M1165.2 301.8 L1167.3 302.5 L1169.4 302.8 L1171.5 302.2 L1173.6 301.6 L1175.7 299.4 L1177.8 297.1 L1179.9 299.6 L1182.0 307.1 L1184.1 332.2 L1186.2 394.5 L1188.3 332.2 L1190.4 304.3 L1192.5 296.9 L1194.6 295.6 L1196.8 298.9 L1198.9 300.9 L1201.0 302.3 L1203.1 302.7 L1205.2 301.6 L1207.3 301.7" stroke="#ecb070"/>
<path d="M1165.2 301.1 L1167.3 301.2 L1169.4 300.6 L1171.5 301.1 L1173.6 301.3 L1175.7 304.5 L1177.8 309.2 L1179.9 315.9 L1182.0 322.6 L1184.1 314.7 L1186.2 288.3 L1188.3 277.5 L1190.4 282.8 L1192.5 294.3 L1194.6 301.5 L1196.8 303.1 L1198.9 303.6 L1201.0 302.5 L1203.1 301.4 L1205.2 301.2 L1207.3 300.7" stroke="#ecb070" stroke-dasharray="4 2"/>
<path d="M1207.3 301.9 L1209.4 302.5 L1211.5 302.4 L1213.6 302.2 L1215.7 301.6 L1217.8 300.1 L1219.9 297.6 L1222.0 299.8 L1224.1 306.5 L1226.2 329.1 L1228.3 385.0 L1230.4 329.1 L1232.5 304.0 L1234.6 297.3 L1236.7 296.2 L1238.8 299.3 L1240.9 300.9 L1243.1 302.0 L1245.2 302.3 L1247.3 301.7 L1249.4 301.6" stroke="#ecd088"/>
<path d="M1207.3 301.2 L1209.4 301.0 L1211.5 300.8 L1213.6 301.0 L1215.7 301.7 L1217.8 304.4 L1219.9 308.5 L1222.0 314.6 L1224.1 320.7 L1226.2 313.5 L1228.3 289.5 L1230.4 279.7 L1232.5 284.5 L1234.6 295.0 L1236.7 301.5 L1238.8 303.1 L1240.9 303.5 L1243.1 302.4 L1245.2 301.6 L1247.3 301.0 L1249.4 301.2" stroke="#ecd088" stroke-dasharray="4 2"/>
<path d="M1249.4 301.5 L1251.5 302.0 L1253.6 302.6 L1255.7 301.7 L1257.8 301.2 L1259.9 300.2 L1262.0 298.0 L1264.1 300.0 L1266.2 306.0 L1268.3 326.2 L1270.4 376.5 L1272.5 326.2 L1274.6 303.8 L1276.7 297.8 L1278.8 296.8 L1280.9 299.2 L1283.0 300.7 L1285.1 301.9 L1287.2 302.2 L1289.4 301.9 L1291.5 301.7" stroke="#dcd478"/>
<path d="M1249.4 301.3 L1251.5 300.9 L1253.6 300.7 L1255.7 300.9 L1257.8 301.3 L1259.9 304.0 L1262.0 307.7 L1264.1 313.2 L1266.2 318.7 L1268.3 312.2 L1270.4 290.8 L1272.5 282.0 L1274.6 286.3 L1276.7 295.6 L1278.8 301.5 L1280.9 302.5 L1283.0 303.0 L1285.1 302.1 L1287.2 301.6 L1289.4 301.6 L1291.5 301.2" stroke="#dcd478" stroke-dasharray="4 2"/>
<path d="M1291.5 301.9 L1293.6 302.0 L1295.7 302.2 L1297.8 301.9 L1299.9 301.2 L1302.0 300.2 L1304.1 298.4 L1306.2 300.2 L1308.3 305.5 L1310.4 323.6 L1312.5 368.5 L1314.6 323.6 L1316.7 303.5 L1318.8 298.1 L1320.9 297.3 L1323.0 299.4 L1325.1 300.9 L1327.2 302.1 L1329.3 302.1 L1331.4 301.7 L1333.5 301.5" stroke="#b4c478"/>
<path d="M1291.5 301.0 L1293.6 301.0 L1295.7 300.9 L1297.8 301.3 L1299.9 301.4 L1302.0 303.8 L1304.1 307.2 L1306.2 312.2 L1308.3 317.2 L1310.4 311.3 L1312.5 291.7 L1314.6 283.7 L1316.7 287.6 L1318.8 296.2 L1320.9 301.5 L1323.0 302.8 L1325.1 303.1 L1327.2 302.3 L1329.3 301.8 L1331.4 301.1 L1333.5 301.2" stroke="#b4c478" stroke-dasharray="4 2"/>
<path d="M1333.5 301.7 L1335.6 301.9 L1337.8 302.1 L1339.9 302.0 L1342.0 301.3 L1344.1 300.3 L1346.2 298.7 L1348.3 300.3 L1350.4 305.1 L1352.5 321.3 L1354.6 361.5 L1356.7 321.3 L1358.8 303.3 L1360.9 298.5 L1363.0 297.7 L1365.1 299.9 L1367.2 300.9 L1369.3 301.8 L1371.4 302.2 L1373.5 301.8 L1375.6 301.3" stroke="#50b4d8"/>
<path d="M1333.5 301.1 L1335.6 301.0 L1337.8 301.2 L1339.9 301.2 L1342.0 301.6 L1344.1 303.8 L1346.2 306.6 L1348.3 311.1 L1350.4 315.6 L1352.5 310.3 L1354.6 292.7 L1356.7 285.5 L1358.8 289.0 L1360.9 296.7 L1363.0 301.5 L1365.1 302.6 L1367.2 302.8 L1369.3 302.2 L1371.4 301.7 L1373.5 301.5 L1375.6 301.3" stroke="#50b4d8" stroke-dasharray="4 2"/>
<path d="M1375.6 301.5 L1377.7 302.1 L1379.8 302.0 L1381.9 301.8 L1384.1 301.5 L1386.2 300.5 L1388.3 299.0 L1390.4 300.4 L1392.5 304.7 L1394.6 319.3 L1396.7 355.5 L1398.8 319.3 L1400.9 303.1 L1403.0 298.8 L1405.1 298.1 L1407.2 300.0 L1409.3 300.9 L1411.4 301.7 L1413.5 301.9 L1415.6 301.8 L1417.7 301.5" stroke="#2a8cf0"/>
<path d="M1375.6 301.0 L1377.7 301.2 L1379.8 300.9 L1381.9 301.2 L1384.1 301.3 L1386.2 303.4 L1388.3 306.2 L1390.4 310.2 L1392.5 314.3 L1394.6 309.5 L1396.7 293.5 L1398.8 286.9 L1400.9 290.1 L1403.0 297.1 L1405.1 301.5 L1407.2 302.4 L1409.3 302.9 L1411.4 302.1 L1413.5 301.6 L1415.6 301.2 L1417.7 301.4" stroke="#2a8cf0" stroke-dasharray="4 2"/>
<path d="M1417.7 301.8 L1419.8 301.9 L1421.9 302.1 L1424.0 301.8 L1426.1 301.6 L1428.2 300.4 L1430.4 299.3 L1432.5 300.6 L1434.6 304.4 L1436.7 317.2 L1438.8 349.0 L1440.9 317.2 L1443.0 302.9 L1445.1 299.1 L1447.2 298.5 L1449.3 299.9 L1451.4 301.0 L1453.5 301.8 L1455.6 301.9 L1457.7 301.7 L1459.8 301.6" stroke="#5a80e8"/>
<path d="M1417.7 301.2 L1419.8 301.2 L1421.9 301.2 L1424.0 301.0 L1426.1 301.4 L1428.2 303.4 L1430.4 305.7 L1432.5 309.4 L1434.6 313.2 L1436.7 308.8 L1438.8 294.2 L1440.9 288.3 L1443.0 291.2 L1445.1 297.5 L1447.2 301.5 L1449.3 302.2 L1451.4 302.7 L1453.5 302.1 L1455.6 301.6 L1457.7 301.4 L1459.8 301.4" stroke="#5a80e8" stroke-dasharray="4 2"/>
<path d="M1459.8 301.7 L1461.9 301.9 L1464.0 302.0 L1466.1 301.7 L1468.2 301.5 L1470.3 300.6 L1472.4 299.6 L1474.5 300.7 L1476.7 304.0 L1478.8 315.0 L1480.9 342.5 L1483.0 315.0 L1485.1 302.7 L1487.2 299.4 L1489.3 298.9 L1491.4 300.2 L1493.5 301.0 L1495.6 301.7 L1497.7 301.9 L1499.8 301.6 L1501.9 301.6" stroke="#5a28a8"/>
<path d="M1459.8 301.1 L1461.9 301.0 L1464.0 301.2 L1466.1 301.3 L1468.2 301.3 L1470.3 303.0 L1472.4 305.4 L1474.5 308.7 L1476.7 312.1 L1478.8 308.1 L1480.9 294.9 L1483.0 289.4 L1485.1 292.1 L1487.2 297.9 L1489.3 301.5 L1491.4 302.1 L1493.5 302.5 L1495.6 302.1 L1497.7 301.6 L1499.8 301.3 L1501.9 301.4" stroke="#5a28a8" stroke-dasharray="4 2"/>
<path d="M1501.9 301.5 L1504.0 301.8 L1506.1 302.0 L1508.2 301.6 L1510.3 301.4 L1512.4 300.7 L1514.5 299.8 L1516.6 300.8 L1518.7 303.7 L1520.8 313.7 L1523.0 338.5 L1525.1 313.7 L1527.2 302.6 L1529.3 299.6 L1531.4 299.2 L1533.5 300.5 L1535.6 301.3 L1537.7 301.7 L1539.8 301.8 L1541.9 301.7 L1544.0 301.6" stroke="#902898"/>
<path d="M1501.9 301.4 L1504.0 301.3 L1506.1 301.1 L1508.2 301.3 L1510.3 301.6 L1512.4 303.0 L1514.5 305.0 L1516.6 308.1 L1518.7 311.2 L1520.8 307.5 L1523.0 295.5 L1525.1 290.5 L1527.2 292.9 L1529.3 298.2 L1531.4 301.5 L1533.5 302.3 L1535.6 302.3 L1537.7 302.0 L1539.8 301.4 L1541.9 301.5 L1544.0 301.4" stroke="#902898" stroke-dasharray="4 2"/>
<path d="M1544.0 301.6 L1546.1 301.8 L1548.2 301.9 L1550.3 301.6 L1552.4 301.5 L1554.5 300.8 L1556.6 299.9 L1558.7 300.8 L1560.8 303.6 L1562.9 312.9 L1565.0 336.0 L1567.1 312.9 L1569.2 302.5 L1571.4 299.8 L1573.5 299.3 L1575.6 300.6 L1577.7 301.1 L1579.8 301.7 L1581.9 301.8 L1584.0 301.7 L1586.1 301.5" stroke="#b02860"/>
<path d="M1544.0 301.4 L1546.1 301.3 L1548.2 301.1 L1550.3 301.3 L1552.4 301.5 L1554.5 302.8 L1556.6 304.7 L1558.7 307.5 L1560.8 310.3 L1562.9 307.0 L1565.0 296.0 L1567.1 291.5 L1569.2 293.7 L1571.4 298.5 L1573.5 301.5 L1575.6 302.2 L1577.7 302.5 L1579.8 301.9 L1581.9 301.7 L1584.0 301.5 L1586.1 301.3" stroke="#b02860" stroke-dasharray="4 2"/>
<path d="M1586.1 301.5 L1588.2 301.7 L1590.3 301.9 L1592.4 301.6 L1594.5 301.4 L1596.6 300.9 L1598.7 300.0 L1600.8 300.9 L1602.9 303.4 L1605.0 311.9 L1607.1 333.0 L1609.2 311.9 L1611.3 302.4 L1613.4 299.9 L1615.5 299.5 L1617.7 300.5 L1619.8 301.1 L1621.9 301.8 L1624.0 301.8 L1626.1 301.5 L1628.2 301.5" stroke="#c06030"/>
<path d="M1586.1 301.2 L1588.2 301.4 L1590.3 301.2 L1592.4 301.3 L1594.5 301.6 L1596.6 302.6 L1598.7 304.4 L1600.8 307.0 L1602.9 309.5 L1605.0 306.5 L1607.1 296.5 L1609.2 292.4 L1611.3 294.4 L1613.4 298.8 L1615.5 301.5 L1617.7 301.9 L1619.8 302.3 L1621.9 302.0 L1624.0 301.5 L1626.1 301.3 L1628.2 301.2" stroke="#c06030" stroke-dasharray="4 2"/>
<path d="M1628.2 301.6 L1630.3 301.8 L1632.4 301.9 L1634.5 301.6 L1636.6 301.5 L1638.7 300.9 L1640.8 300.2 L1642.9 300.9 L1645.0 303.2 L1647.1 310.7 L1649.2 329.5 L1651.3 310.7 L1653.4 302.3 L1655.5 300.1 L1657.6 299.7 L1659.7 300.7 L1661.8 301.3 L1664.0 301.7 L1666.1 301.8 L1668.2 301.7 L1670.3 301.4" stroke="#d08028"/>
<path d="M1628.2 301.3 L1630.3 301.2 L1632.4 301.1 L1634.5 301.3 L1636.6 301.6 L1638.7 302.5 L1640.8 304.1 L1642.9 306.5 L1645.0 308.8 L1647.1 306.0 L1649.2 297.0 L1651.3 293.2 L1653.4 295.1 L1655.5 299.0 L1657.6 301.5 L1659.7 302.1 L1661.8 302.2 L1664.0 301.9 L1666.1 301.7 L1668.2 301.4 L1670.3 301.3" stroke="#d08028" stroke-dasharray="4 2"/>
<path d="M1670.3 301.5 L1672.4 301.7 L1674.5 301.7 L1676.6 301.7 L1678.7 301.5 L1680.8 301.0 L1682.9 300.3 L1685.0 301.0 L1687.1 303.0 L1689.2 309.8 L1691.3 326.5 L1693.4 309.8 L1695.5 302.2 L1697.6 300.2 L1699.7 299.9 L1701.8 300.7 L1703.9 301.3 L1706.0 301.7 L1708.1 301.7 L1710.3 301.5 L1712.4 301.5" stroke="#c8a028"/>
<path d="M1670.3 301.4 L1672.4 301.4 L1674.5 301.2 L1676.6 301.4 L1678.7 301.5 L1680.8 302.5 L1682.9 303.9 L1685.0 306.0 L1687.1 308.1 L1689.2 305.6 L1691.3 297.4 L1693.4 294.0 L1695.5 295.6 L1697.6 299.2 L1699.7 301.5 L1701.8 301.9 L1703.9 302.2 L1706.0 301.8 L1708.1 301.6 L1710.3 301.4 L1712.4 301.4" stroke="#c8a028" stroke-dasharray="4 2"/>
<path d="M1712.4 301.5 L1714.5 301.6 L1716.6 301.8 L1718.7 301.7 L1720.8 301.5 L1722.9 301.1 L1725.0 300.4 L1727.1 301.0 L1729.2 302.9 L1731.3 309.0 L1733.4 324.2 L1735.5 309.0 L1737.6 302.2 L1739.7 300.4 L1741.8 300.1 L1743.9 300.8 L1746.0 301.4 L1748.1 301.7 L1750.2 301.8 L1752.3 301.7 L1754.4 301.4" stroke="#b0b830"/>
<path d="M1712.4 301.4 L1714.5 301.4 L1716.6 301.2 L1718.7 301.2 L1720.8 301.6 L1722.9 302.4 L1725.0 303.7 L1727.1 305.6 L1729.2 307.5 L1731.3 305.3 L1733.4 297.7 L1735.5 294.7 L1737.6 296.2 L1739.7 299.4 L1741.8 301.5 L1743.9 301.8 L1746.0 302.1 L1748.1 301.7 L1750.2 301.7 L1752.3 301.5 L1754.4 301.3" stroke="#b0b830" stroke-dasharray="4 2"/>
<path d="M1754.4 301.5 L1756.5 301.6 L1758.7 301.8 L1760.8 301.6 L1762.9 301.4 L1765.0 301.1 L1767.1 300.6 L1769.2 301.1 L1771.3 302.7 L1773.4 307.9 L1775.5 321.0 L1777.6 307.9 L1779.7 302.1 L1781.8 300.5 L1783.9 300.3 L1786.0 301.0 L1788.1 301.4 L1790.2 301.6 L1792.3 301.7 L1794.4 301.6 L1796.5 301.5" stroke="#6a9060"/>
<path d="M1754.4 301.3 L1756.5 301.4 L1758.7 301.2 L1760.8 301.4 L1762.9 301.5 L1765.0 302.3 L1767.1 303.5 L1769.2 305.2 L1771.3 307.0 L1773.4 304.9 L1775.5 298.1 L1777.6 295.3 L1779.7 296.6 L1781.8 299.6 L1783.9 301.5 L1786.0 302.0 L1788.1 302.1 L1790.2 301.8 L1792.3 301.6 L1794.4 301.4 L1796.5 301.4" stroke="#6a9060" stroke-dasharray="4 2"/>
<path d="M1796.5 301.6 L1798.6 301.7 L1800.7 301.7 L1802.8 301.6 L1805.0 301.5 L1807.1 301.1 L1809.2 300.7 L1811.3 301.1 L1813.4 302.6 L1815.5 307.4 L1817.6 319.5 L1819.7 307.4 L1821.8 302.0 L1823.9 300.6 L1826.0 300.4 L1828.1 301.0 L1830.2 301.3 L1832.3 301.6 L1834.4 301.7 L1836.5 301.5 L1838.6 301.5" stroke="#1878a0"/>
<path d="M1796.5 301.4 L1798.6 301.3 L1800.7 301.4 L1802.8 301.4 L1805.0 301.4 L1807.1 302.3 L1809.2 303.3 L1811.3 304.9 L1813.4 306.5 L1815.5 304.6 L1817.6 298.4 L1819.7 295.8 L1821.8 297.1 L1823.9 299.8 L1826.0 301.5 L1828.1 301.9 L1830.2 302.0 L1832.3 301.7 L1834.4 301.6 L1836.5 301.4 L1838.6 301.3" stroke="#1878a0" stroke-dasharray="4 2"/>
<path d="M1838.6 301.9 L1840.7 301.1 L1842.8 301.1 L1844.9 301.6 L1847.0 301.3 L1849.1 301.4 L1851.3 301.6 L1853.4 301.3 L1855.5 301.7 L1857.6 301.5 L1859.7 301.5" stroke="#1860b0"/>
<path d="M1838.6 301.4 L1840.7 301.7 L1842.8 301.3 L1844.9 301.5 L1847.0 301.4 L1849.1 301.6 L1851.3 301.6 L1853.4 301.7 L1855.5 301.4 L1857.6 301.5 L1859.7 301.5" stroke="#1860b0" stroke-dasharray="4 2"/>
</g>
<rect x="462" y="145" width="1" height="859" fill="#c6c650"/>
<rect x="1861" y="145" width="1" height="859" fill="#c6c650"/>
<g fill="#969696" shape-rendering="crispEdges">
<rect x="426" y="144" width="1477" height="1"/>
<rect x="426" y="1004" width="1477" height="1"/>
<rect x="426" y="144" width="1" height="861"/>
<rect x="1902" y="144" width="1" height="861"/>
</g>
<rect x="463" y="144" width="1398" height="1" fill="#8080c8"/>
<g shape-rendering="crispEdges">
<rect x="471" y="145" width="1" height="5" fill="#a0a0d0" opacity="1"/>
<rect x="471" y="999" width="1" height="5" fill="#a0a0d0" opacity="1"/>
<rect x="611" y="145" width="1" height="2" fill="#a0a0d0" opacity="0.45"/>
<rect x="611" y="1002" width="1" height="2" fill="#a0a0d0" opacity="0.45"/>
<rect x="752" y="145" width="1" height="2" fill="#a0a0d0" opacity="0.45"/>
<rect x="752" y="1002" width="1" height="2" fill="#a0a0d0" opacity="0.45"/>
<rect x="892" y="145" width="1" height="2" fill="#a0a0d0" opacity="0.45"/>
<rect x="892" y="1002" width="1" height="2" fill="#a0a0d0" opacity="0.45"/>
<rect x="1032" y="145" width="1" height="2" fill="#a0a0d0" opacity="0.45"/>
<rect x="1032" y="1002" width="1" height="2" fill="#a0a0d0" opacity="0.45"/>
<rect x="1172" y="145" width="1" height="4" fill="#a0a0d0" opacity="1"/>
<rect x="1172" y="1000" width="1" height="4" fill="#a0a0d0" opacity="1"/>
<rect x="1313" y="145" width="1" height="2" fill="#a0a0d0" opacity="0.45"/>
<rect x="1313" y="1002" width="1" height="2" fill="#a0a0d0" opacity="0.45"/>
<rect x="1453" y="145" width="1" height="2" fill="#a0a0d0" opacity="0.45"/>
<rect x="1453" y="1002" width="1" height="2" fill="#a0a0d0" opacity="0.45"/>
<rect x="1593" y="145" width="1" height="2" fill="#a0a0d0" opacity="0.45"/>
<rect x="1593" y="1002" width="1" height="2" fill="#a0a0d0" opacity="0.45"/>
<rect x="1734" y="145" width="1" height="2" fill="#a0a0d0" opacity="0.45"/>
<rect x="1734" y="1002" width="1" height="2" fill="#a0a0d0" opacity="0.45"/>
<rect x="1874" y="145" width="1" height="5" fill="#969696" opacity="1"/>
<rect x="1874" y="999" width="1" height="5" fill="#969696" opacity="1"/>
<rect x="427" y="199" width="3" height="1" fill="#969696" opacity="0.5"/>
<rect x="1899" y="199" width="3" height="1" fill="#969696" opacity="0.5"/>
<rect x="427" y="301" width="5" height="1" fill="#969696" opacity="1"/>
<rect x="1897" y="301" width="5" height="1" fill="#969696" opacity="1"/>
<rect x="427" y="403" width="3" height="1" fill="#969696" opacity="0.5"/>
<rect x="1899" y="403" width="3" height="1" fill="#969696" opacity="0.5"/>
<rect x="427" y="505" width="3" height="1" fill="#969696" opacity="0.5"/>
<rect x="1899" y="505" width="3" height="1" fill="#969696" opacity="0.5"/>
<rect x="427" y="607" width="3" height="1" fill="#969696" opacity="0.5"/>
<rect x="1899" y="607" width="3" height="1" fill="#969696" opacity="0.5"/>
<rect x="427" y="710" width="3" height="1" fill="#969696" opacity="0.5"/>
<rect x="1899" y="710" width="3" height="1" fill="#969696" opacity="0.5"/>
<rect x="427" y="812" width="5" height="1" fill="#969696" opacity="1"/>
<rect x="1897" y="812" width="5" height="1" fill="#969696" opacity="1"/>
<rect x="427" y="914" width="3" height="1" fill="#969696" opacity="0.5"/>
<rect x="1899" y="914" width="3" height="1" fill="#969696" opacity="0.5"/>
</g>
<g fill="#9c9c9c">
<text x="471.5" y="1017.2" text-anchor="middle">0</text>
<text x="611.8" y="1017.2" text-anchor="middle">2000</text>
<text x="752.1" y="1017.2" text-anchor="middle">4000</text>
<text x="892.4" y="1017.2" text-anchor="middle">6000</text>
<text x="1032.7" y="1017.2" text-anchor="middle">8000</text>
<text x="1173.0" y="1017.2" text-anchor="middle">10000</text>
<text x="1313.2" y="1017.2" text-anchor="middle">12000</text>
<text x="1453.5" y="1017.2" text-anchor="middle">14000</text>
<text x="1593.8" y="1017.2" text-anchor="middle">16000</text>
<text x="1734.1" y="1017.2" text-anchor="middle">18000</text>
<text x="1874.4" y="1017.2" text-anchor="middle">20000</text>
<text x="422" y="204.1" text-anchor="end">200000</text>
<text x="422" y="306.2" text-anchor="end">0</text>
<text x="422" y="408.3" text-anchor="end">-200000</text>
<text x="422" y="510.5" text-anchor="end">-400000</text>
<text x="422" y="612.6" text-anchor="end">-600000</text>
<text x="422" y="714.8" text-anchor="end">-800000</text>
<text x="422" y="816.9" text-anchor="end">-1e+06</text>
<text x="422" y="919.0" text-anchor="end">-1.2e+06</text>
</g>
<g shape-rendering="auto">
<line x1="1344" x2="1365" y1="228.5" y2="228.5" stroke="#1878b8" stroke-width="1.3"/>
<line x1="1344" x2="1365" y1="251.5" y2="251.5" stroke="#1858a8" stroke-width="1.3"/>
<line x1="1344" x2="1365" y1="274.5" y2="274.5" stroke="#8a1aa8" stroke-width="1.3"/>
<line x1="1344" x2="1365" y1="297.5" y2="297.5" stroke="#b818a0" stroke-width="1.3"/>
<line x1="1344" x2="1365" y1="320.5" y2="320.5" stroke="#e0142c" stroke-width="1.3"/>
<line x1="1344" x2="1365" y1="343.5" y2="343.5" stroke="#f0600c" stroke-width="1.3"/>
<line x1="1344" x2="1365" y1="366.5" y2="366.5" stroke="#f59a18" stroke-width="1.3"/>
<line x1="1344" x2="1365" y1="389.5" y2="389.5" stroke="#f5c018" stroke-width="1.3"/>
<line x1="1344" x2="1365" y1="412.5" y2="412.5" stroke="#d8d818" stroke-width="1.3"/>
<line x1="1344" x2="1365" y1="435.5" y2="435.5" stroke="#a8c818" stroke-width="1.3"/>
<line x1="1344" x2="1365" y1="458.5" y2="458.5" stroke="#18a098" stroke-width="1.3"/>
<line x1="1344" x2="1365" y1="481.5" y2="481.5" stroke="#1890e8" stroke-width="1.3"/>
<line x1="1344" x2="1365" y1="504.5" y2="504.5" stroke="#2870d8" stroke-width="1.3"/>
<line x1="1344" x2="1365" y1="527.5" y2="527.5" stroke="#8858c0" stroke-width="1.3"/>
<line x1="1344" x2="1365" y1="550.5" y2="550.5" stroke="#d040b0" stroke-width="1.3"/>
<line x1="1344" x2="1365" y1="573.5" y2="573.5" stroke="#f06048" stroke-width="1.3"/>
<line x1="1344" x2="1365" y1="596.5" y2="596.5" stroke="#f08a40" stroke-width="1.3"/>
<line x1="1344" x2="1365" y1="619.5" y2="619.5" stroke="#f0b040" stroke-width="1.3"/>
<line x1="1344" x2="1365" y1="642.5" y2="642.5" stroke="#f0e048" stroke-width="1.3"/>
<line x1="1344" x2="1365" y1="665.5" y2="665.5" stroke="#e0e040" stroke-width="1.3"/>
<line x1="1344" x2="1365" y1="688.5" y2="688.5" stroke="#c0d850" stroke-width="1.3"/>
<line x1="1344" x2="1365" y1="711.5" y2="711.5" stroke="#40c0a0" stroke-width="1.3"/>
<line x1="1344" x2="1365" y1="734.5" y2="734.5" stroke="#20a0e8" stroke-width="1.3"/>
<line x1="1344" x2="1365" y1="757.5" y2="757.5" stroke="#6090e0" stroke-width="1.3"/>
<line x1="1344" x2="1365" y1="780.5" y2="780.5" stroke="#402868" stroke-width="1.3"/>
<line x1="1344" x2="1365" y1="803.5" y2="803.5" stroke="#782050" stroke-width="1.3"/>
<line x1="1344" x2="1365" y1="826.5" y2="826.5" stroke="#a82828" stroke-width="1.3"/>
<line x1="1344" x2="1365" y1="849.5" y2="849.5" stroke="#b85020" stroke-width="1.3"/>
<line x1="1344" x2="1365" y1="872.5" y2="872.5" stroke="#d08818" stroke-width="1.3"/>
<line x1="1344" x2="1365" y1="895.5" y2="895.5" stroke="#d0a820" stroke-width="1.3"/>
<line x1="1344" x2="1365" y1="918.5" y2="918.5" stroke="#c8c020" stroke-width="1.3"/>
<line x1="1344" x2="1365" y1="941.5" y2="941.5" stroke="#8a9030" stroke-width="1.3"/>
<line x1="1344" x2="1365" y1="964.5" y2="964.5" stroke="#187868" stroke-width="1.3"/>
<line x1="1344" x2="1365" y1="987.5" y2="987.5" stroke="#185888" stroke-width="1.3"/>
</g>
<g fill="#aeaeae">
<text x="1373" y="233">pnipam_600MHz_ExpNr1004_2H_T2_CPMG_2023-10-23_2329_296p0K_00_TSE0p0002s</text>
<text x="1373" y="256">pnipam_600MHz_ExpNr1004_2H_T2_CPMG_2023-10-23_2329_296p0K_01_TSE0p0302s</text>
<text x="1373" y="279">pnipam_600MHz_ExpNr1004_2H_T2_CPMG_2023-10-23_2329_296p0K_02_TSE0p0602s</text>
<text x="1373" y="302">pnipam_600MHz_ExpNr1004_2H_T2_CPMG_2023-10-23_2329_296p0K_03_TSE0p0902s</text>
<text x="1373" y="325">pnipam_600MHz_ExpNr1004_2H_T2_CPMG_2023-10-23_2329_296p0K_04_TSE0p1202s</text>
<text x="1373" y="348">pnipam_600MHz_ExpNr1004_2H_T2_CPMG_2023-10-23_2329_296p0K_05_TSE0p1502s</text>
<text x="1373" y="371">pnipam_600MHz_ExpNr1004_2H_T2_CPMG_2023-10-23_2329_296p0K_06_TSE0p1802s</text>
<text x="1373" y="394">pnipam_600MHz_ExpNr1004_2H_T2_CPMG_2023-10-23_2329_296p0K_07_TSE0p2102s</text>
<text x="1373" y="417">pnipam_600MHz_ExpNr1004_2H_T2_CPMG_2023-10-23_2329_296p0K_08_TSE0p2402s</text>
<text x="1373" y="440">pnipam_600MHz_ExpNr1004_2H_T2_CPMG_2023-10-23_2329_296p0K_09_TSE0p2702s</text>
<text x="1373" y="463">pnipam_600MHz_ExpNr1004_2H_T2_CPMG_2023-10-23_2329_296p0K_10_TSE0p3002s</text>
<text x="1373" y="486">pnipam_600MHz_ExpNr1004_2H_T2_CPMG_2023-10-23_2329_296p0K_11_TSE0p3302s</text>
<text x="1373" y="509">pnipam_600MHz_ExpNr1004_2H_T2_CPMG_2023-10-23_2329_296p0K_12_TSE0p3602s</text>
<text x="1373" y="532">pnipam_600MHz_ExpNr1004_2H_T2_CPMG_2023-10-23_2329_296p0K_13_TSE0p3902s</text>
<text x="1373" y="555">pnipam_600MHz_ExpNr1004_2H_T2_CPMG_2023-10-23_2329_296p0K_14_TSE0p4202s</text>
<text x="1373" y="578">pnipam_600MHz_ExpNr1004_2H_T2_CPMG_2023-10-23_2329_296p0K_15_TSE0p4502s</text>
<text x="1373" y="601">pnipam_600MHz_ExpNr1004_2H_T2_CPMG_2023-10-23_2329_296p0K_16_TSE0p4802s</text>
<text x="1373" y="624">pnipam_600MHz_ExpNr1004_2H_T2_CPMG_2023-10-23_2329_296p0K_17_TSE0p5102s</text>
<text x="1373" y="647">pnipam_600MHz_ExpNr1004_2H_T2_CPMG_2023-10-23_2329_296p0K_18_TSE0p5402s</text>
<text x="1373" y="670">pnipam_600MHz_ExpNr1004_2H_T2_CPMG_2023-10-23_2329_296p0K_19_TSE0p5702s</text>
<text x="1373" y="693">pnipam_600MHz_ExpNr1004_2H_T2_CPMG_2023-10-23_2329_296p0K_20_TSE0p6002s</text>
<text x="1373" y="716">pnipam_600MHz_ExpNr1004_2H_T2_CPMG_2023-10-23_2329_296p0K_21_TSE0p6302s</text>
<text x="1373" y="739">pnipam_600MHz_ExpNr1004_2H_T2_CPMG_2023-10-23_2329_296p0K_22_TSE0p6602s</text>
<text x="1373" y="762">pnipam_600MHz_ExpNr1004_2H_T2_CPMG_2023-10-23_2329_296p0K_23_TSE0p6902s</text>
<text x="1373" y="785">pnipam_600MHz_ExpNr1004_2H_T2_CPMG_2023-10-23_2329_296p0K_24_TSE0p7202s</text>
<text x="1373" y="808">pnipam_600MHz_ExpNr1004_2H_T2_CPMG_2023-10-23_2329_296p0K_25_TSE0p7502s</text>
<text x="1373" y="831">pnipam_600MHz_ExpNr1004_2H_T2_CPMG_2023-10-23_2329_296p0K_26_TSE0p7802s</text>
<text x="1373" y="854">pnipam_600MHz_ExpNr1004_2H_T2_CPMG_2023-10-23_2329_296p0K_27_TSE0p8102s</text>
<text x="1373" y="877">pnipam_600MHz_ExpNr1004_2H_T2_CPMG_2023-10-23_2329_296p0K_28_TSE0p8402s</text>
<text x="1373" y="900">pnipam_600MHz_ExpNr1004_2H_T2_CPMG_2023-10-23_2329_296p0K_29_TSE0p8702s</text>
<text x="1373" y="923">pnipam_600MHz_ExpNr1004_2H_T2_CPMG_2023-10-23_2329_296p0K_30_TSE0p9002s</text>
<text x="1373" y="946">pnipam_600MHz_ExpNr1004_2H_T2_CPMG_2023-10-23_2329_296p0K_31_TSE0p9302s</text>
<text x="1373" y="969">pnipam_600MHz_ExpNr1004_2H_T2_CPMG_2023-10-23_2329_296p0K_32_TSE0p9602s</text>
<text x="1373" y="992">pnipam_600MHz_ExpNr1004_2H_T2_CPMG_2023-10-23_2329_296p0K_33_TSE0p9902s</text>
</g>
</svg>


<div class="abs" style="left:364px;top:127px;width:1549px;height:1px;background:#e3e3e3"></div>
<div class="abs" style="left:364px;top:128px;width:1549px;height:1px;background:#fdfdfd"></div>
<!-- graph toolbar -->
<svg class="abs" style="left:364px;top:98px;will-change:transform" width="220" height="30" viewBox="364 98 220 30">
 <g font-family="Liberation Sans, DejaVu Sans, sans-serif" font-size="6.4" fill="#444">
  <text x="371.6" y="112.2">log</text><text x="398.6" y="114.4">log</text>
 </g>
 <rect x="369" y="114.9" width="12" height="1" fill="#111"/><path d="M379.6 113.6 L382.6 115.4 L379.6 117.2Z" fill="#111"/>
 <rect x="394.8" y="107" width="1" height="12" fill="#111"/><path d="M393.5 108.8 L395.3 105.8 L397.1 108.8Z" fill="#111"/>
 <rect x="414" y="101" width="1" height="23" fill="#d2d2d2"/><rect x="415" y="101" width="1" height="23" fill="#fbfbfb"/>
 <g stroke="#111" stroke-width="1.15" fill="none"><path d="M424.5 104.2 V119.6 M429.8 104.2 V119.6 M435.1 104.2 V119.6 M422.4 106.4 H437 M422.4 111.9 H437 M422.4 117.3 H437"/></g>
 <g>
  <circle cx="454.6" cy="112" r="7.6" fill="#fff"/>
  <path d="M454.6 104.4 A7.6 7.6 0 0 0 454.6 119.6 A3.8 3.8 0 0 0 454.6 112 A3.8 3.8 0 0 1 454.6 104.4Z" fill="#000"/>
  <circle cx="454.6" cy="112" r="7.6" fill="none" stroke="#000" stroke-width="0" />
  <path d="M454.6 104.4 A7.6 7.6 0 0 0 454.6 119.6" stroke="#000" stroke-width="0.6" fill="none"/>
  <rect x="453.7" y="107.3" width="1.9" height="1.9" fill="#000"/><rect x="453.7" y="114.9" width="1.9" height="1.9" fill="#fff"/>
 </g>
 <rect x="468" y="101" width="1" height="23" fill="#d2d2d2"/><rect x="469" y="101" width="1" height="23" fill="#fbfbfb"/>
 <text x="476.2" y="115.2" font-family="Liberation Serif, DejaVu Serif, serif" font-style="italic" font-size="9.6" fill="#3c3c3c" letter-spacing="0.9">pfft</text>
 <rect x="573" y="101" width="1" height="23" fill="#d2d2d2"/><rect x="574" y="101" width="1" height="23" fill="#fbfbfb"/>
 <g opacity="0.8">
  <path d="M558.4 104.2 L561.4 104 L562.4 107 L561.6 110.4 L563 113.6 L562.6 117 L563.2 119.8 L556.4 119.8 L557.8 117.2 L556.2 114.4 L557.6 111.6 L557 108.4Z" fill="#b4a4cc"/>
  <path d="M559 105.4 L561 105.2 L561.4 108.6 L559.4 108.8Z M558 112 L561.6 111.6 L561.8 113.8 L558.2 114Z" fill="#8c84b8"/>
  <rect x="560.6" y="116" width="1.4" height="1.2" fill="#c87850"/><rect x="557.4" y="118.2" width="4.6" height="1.3" fill="#7a72a8"/>
 </g>
</svg>
<div class="gtbtn" style="left:497px;width:24px"></div>
<div class="gtbtn" style="left:522px;width:24px"></div>
<div class="abs ser" style="left:506px;top:100.4px;font-size:19.5px;line-height:24px;color:#111">i</div>
<div class="abs ser" style="left:530px;top:100.4px;font-size:19.5px;line-height:24px;color:#111">r</div>
<svg class="abs" style="left:1770px;top:106px" width="90" height="12" viewBox="1770 106 90 12"><path d="M1773.8 108.8 L1778 112.4 L1773.8 116Z" fill="#5a5a5a"/><path d="M1846.8 108.8 L1851 112.4 L1846.8 116Z" fill="#5a5a5a"/></svg>
<div class="lbl" style="left:1786px;top:106px">Limits</div>
<div class="lbl" style="left:1859px;top:106px">Labels</div>
<!-- MDI buttons -->
<div class="mdibtn" style="left:1860px"></div><div class="mdibtn" style="left:1879px"></div><div class="mdibtn" style="left:1900px"></div>
<svg class="abs" style="left:1860px;top:35px" width="60" height="20" viewBox="1860 35 60 20">
 <g fill="none" stroke="#5e5e5c" stroke-width="1.1">
  <rect x="1864.4" y="39.4" width="10" height="10.4" rx="2.2"/><rect x="1883.4" y="39.4" width="10" height="10.4" rx="2.2"/><rect x="1904.4" y="39.4" width="10" height="10.4" rx="2.2"/>
  <rect x="1887.6" y="41.8" width="3.8" height="3.6" rx="0.8" stroke-width="0.9"/><rect x="1885.6" y="43.8" width="3.8" height="3.6" rx="0.8" fill="#f0f0f0" stroke-width="0.9"/>
 </g>
 <rect x="1866.2" y="44" width="6.6" height="1.5" fill="#5a5a58"/>
 <path d="M1906.8 42 L1912 47.2 M1912 42 L1906.8 47.2" stroke="#5a5a58" stroke-width="1.6" fill="none"/>
</svg>
<!-- window buttons -->
<svg class="abs" style="left:0;top:0" width="1920" height="34" viewBox="0 0 1920 34">
 <g fill="#3f5866">
  <rect x="1829" y="19" width="5" height="2"/>
  <path d="M1863 14 h7 v7 h-7Z M1865 16 v3 h3 v-3Z" fill-rule="evenodd"/>
 </g>
 <path d="M1898.6 14.6 L1904.6 20.6 M1904.6 14.6 L1898.6 20.6" stroke="#3f5866" stroke-width="2" fill="none"/>
 <g fill="#3f5866"><path d="M16 14 h5 v7 h-5Z M17.9 16 v3 h1.3 v-3Z" fill-rule="evenodd"/><rect x="19" y="13" width="1.2" height="1.2"/></g>
</svg>

<div id="statusbar"><span>x=9.14e+03; y=2.44e+05</span></div>
</body>
</html>
